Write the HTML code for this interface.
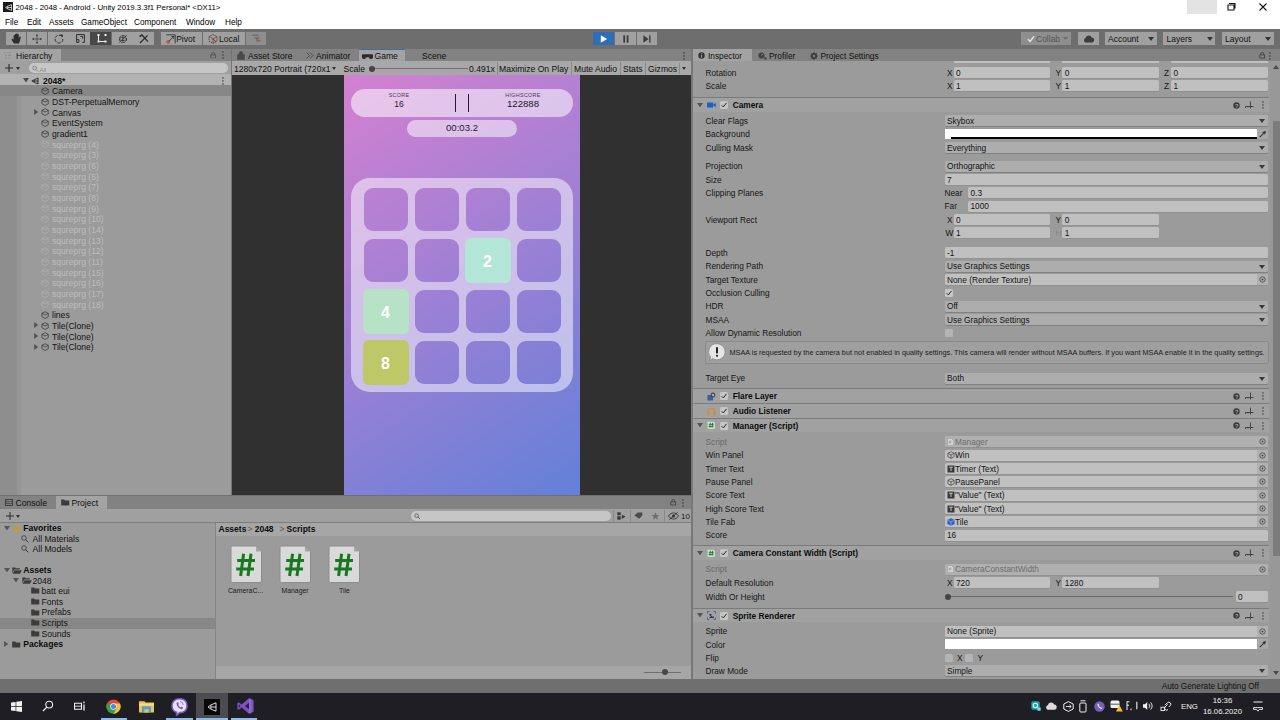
<!DOCTYPE html>
<html><head><meta charset="utf-8"><title>Unity</title>
<style>
html,body{margin:0;padding:0;}
body{width:1280px;height:720px;overflow:hidden;position:relative;background:#9a9a9a;font-family:"Liberation Sans",sans-serif;}
div,span,svg{position:absolute;box-sizing:border-box;}
span{white-space:nowrap;}
#root{left:0;top:0;width:1280px;height:720px;overflow:hidden;}
</style></head><body><div id="root">
<div style="left:0px;top:0px;width:1280px;height:29px;background:#ffffff;"></div>
<div style="left:3px;top:2px;width:10px;height:10px;background:#1a1a1a;"></div>
<span style="top:2px;line-height:12px;font-size:7.8px;color:#000;left:15.5px;">2048 - 2048 - Android - Unity 2019.3.3f1 Personal* &lt;DX11&gt;</span>
<span style="top:17px;line-height:12px;font-size:8.2px;color:#000;left:5px;">File</span>
<span style="top:17px;line-height:12px;font-size:8.2px;color:#000;left:27px;">Edit</span>
<span style="top:17px;line-height:12px;font-size:8.2px;color:#000;left:49px;">Assets</span>
<span style="top:17px;line-height:12px;font-size:8.2px;color:#000;left:81px;">GameObject</span>
<span style="top:17px;line-height:12px;font-size:8.2px;color:#000;left:134px;">Component</span>
<span style="top:17px;line-height:12px;font-size:8.2px;color:#000;left:186px;">Window</span>
<span style="top:17px;line-height:12px;font-size:8.2px;color:#000;left:225px;">Help</span>
<div style="left:1187px;top:0px;width:30px;height:14px;background:#e3e3e3;"></div>
<svg style="left:1226px;top:2px" width="12" height="10" viewBox="0 0 12 10"><path d="M3 1.5h6v5M2 3h6v5H2z" fill="none" stroke="#111" stroke-width="1.1"/></svg>
<svg style="left:1258px;top:2px" width="10" height="10" viewBox="0 0 10 10"><path d="M1.5 1.5l7 7M8.5 1.5l-7 7" stroke="#111" stroke-width="1.1"/></svg>
<div style="left:0px;top:29px;width:1280px;height:20px;background:#6e6e6e;"></div>
<div style="left:5.7px;top:32px;width:20.3px;height:13px;background:#a0a0a0;"></div>
<div style="left:27px;top:32px;width:20.3px;height:13px;background:#a0a0a0;"></div>
<div style="left:48.2px;top:32px;width:42px;height:13px;background:#a0a0a0;"></div>
<div style="left:90.3px;top:32px;width:21.2px;height:13px;background:#484848;"></div>
<div style="left:112px;top:32px;width:42px;height:13px;background:#a0a0a0;"></div>
<div style="left:161px;top:32px;width:41px;height:13px;background:#a0a0a0;"></div>
<div style="left:203px;top:32px;width:42px;height:13px;background:#a0a0a0;"></div>
<div style="left:246px;top:32px;width:20px;height:13px;background:#8e8e8e;"></div>
<span style="top:33px;line-height:12px;font-size:8.5px;color:#101010;left:176.2px;">Pivot</span>
<span style="top:33px;line-height:12px;font-size:8.5px;color:#101010;left:219px;">Local</span>
<div style="left:593px;top:32px;width:21px;height:13px;background:#2f6db5;"></div>
<div style="left:615px;top:32px;width:21px;height:13px;background:#a0a0a0;"></div>
<div style="left:637px;top:32px;width:20px;height:13px;background:#a0a0a0;"></div>
<div style="left:1021px;top:32px;width:50px;height:13px;background:#8e8e8e;"></div>
<span style="top:33px;line-height:12px;font-size:8.5px;color:#555;left:1036px;">Collab</span>
<div style="left:1078px;top:32px;width:20.5px;height:13px;background:#a0a0a0;"></div>
<div style="left:1105px;top:32px;width:52px;height:13px;background:#a0a0a0;"></div>
<span style="top:33px;line-height:12px;font-size:8.5px;color:#101010;left:1108px;">Account</span>
<div style="left:1163px;top:32px;width:52px;height:13px;background:#a0a0a0;"></div>
<span style="top:33px;line-height:12px;font-size:8.5px;color:#101010;left:1166.5px;">Layers</span>
<div style="left:1222px;top:32px;width:52px;height:13px;background:#a0a0a0;"></div>
<span style="top:33px;line-height:12px;font-size:8.5px;color:#101010;left:1225px;">Layout</span>
<div style="left:0px;top:48.5px;width:232px;height:12.5px;background:#828282;"></div>
<div style="left:0px;top:48.5px;width:61px;height:12.5px;background:#a3a3a3;"></div>
<span style="top:50px;line-height:12px;font-size:8.5px;color:#101010;left:16px;">Hierarchy</span>
<div style="left:0px;top:61px;width:232px;height:13px;background:#a0a0a0;"></div>
<div style="left:29px;top:63px;width:199px;height:10px;background:#c6c6c6;border-radius:5px;"></div>
<div style="left:0px;top:74px;width:232px;height:421px;background:#9b9b9b;"></div>
<div style="left:0px;top:74px;width:20.5px;height:421px;background:#959595;"></div>
<div style="left:0px;top:74px;width:17px;height:421px;background:#8e8e8e;"></div>
<div style="left:0px;top:74px;width:232px;height:11px;background:#b2b2b2;"></div>
<div style="left:0px;top:85px;width:232px;height:11px;background:#878787;"></div>
<div style="left:232px;top:48.5px;width:459px;height:12.5px;background:#828282;"></div>
<div style="left:359px;top:48.5px;width:46px;height:12.5px;background:#a3a3a3;border-top:1px solid #3f6fa8;"></div>
<div style="left:232px;top:61px;width:459px;height:14px;background:#a8a8a8;"></div>
<div style="left:232px;top:75px;width:459px;height:420px;background:#303030;"></div>
<div style="left:344px;top:75px;width:236px;height:420px;background:linear-gradient(146deg,rgb(213,128,209) 0%,rgb(99,128,216) 100%);"></div>
<div style="left:691px;top:49px;width:2px;height:630px;background:#787878;"></div>
<div style="left:231px;top:49px;width:1px;height:447px;background:#757575;"></div>
<div style="left:693px;top:48.5px;width:587px;height:12.5px;background:#828282;"></div>
<div style="left:693px;top:48.5px;width:59px;height:12.5px;background:#a3a3a3;"></div>
<div style="left:693px;top:61px;width:587px;height:618px;background:#9b9b9b;"></div>
<div style="left:0px;top:495px;width:691px;height:1.2px;background:#707070;"></div>
<div style="left:0px;top:496px;width:691px;height:13px;background:#828282;"></div>
<div style="left:56px;top:496px;width:51px;height:13px;background:#a3a3a3;"></div>
<div style="left:0px;top:509px;width:691px;height:13px;background:#a0a0a0;"></div>
<div style="left:0px;top:522px;width:691px;height:0.8px;background:#7e7e7e;"></div>
<div style="left:0px;top:522.8px;width:215px;height:157px;background:#9b9b9b;"></div>
<div style="left:215px;top:522.8px;width:1px;height:157px;background:#858585;"></div>
<div style="left:216px;top:522.8px;width:475px;height:157px;background:#9b9b9b;"></div>
<div style="left:216px;top:522.8px;width:475px;height:13px;background:#a6a6a6;"></div>
<div style="left:216px;top:665.5px;width:475px;height:13.5px;background:#a6a6a6;"></div>
<div style="left:0px;top:618px;width:215px;height:10.5px;background:#878787;"></div>
<div style="left:0px;top:679px;width:1280px;height:14px;background:#6f6f6f;"></div>
<span style="top:681px;line-height:12px;font-size:8.2px;color:#111;right:21px;">Auto Generate Lighting Off</span>
<div style="left:0px;top:693px;width:1280px;height:27px;background:#1f1e25;"></div>
<svg style="left:209.5px;top:51.5px" width="6.5" height="6.5" viewBox="0 0 8 8"><path d="M2.2 3.6V2.4a1.8 1.8 0 0 1 3.6 0V3.6" fill="none" stroke="#4a4a4a" stroke-width="0.9"/><rect x="1" y="3.6" width="6" height="3.8" fill="none" stroke="#4a4a4a" stroke-width="0.9"/></svg>
<svg style="left:221.5px;top:51px" width="2" height="8" viewBox="0 0 2 8"><rect x="0.3" y="0.3" width="1.3" height="1.3" fill="#3a3a3a"/><rect x="0.3" y="3.3" width="1.3" height="1.3" fill="#3a3a3a"/><rect x="0.3" y="6.3" width="1.3" height="1.3" fill="#3a3a3a"/></svg>
<svg style="left:4px;top:52px" width="7" height="7" viewBox="0 0 7 7"><path d="M0 1h2M3 1h4M1 3.5h2M4 3.5h3M1 6h2M4 6h3" stroke="#8c8c8c" stroke-width="0.9"/></svg>
<svg style="left:5px;top:64px" width="8" height="8" viewBox="0 0 8 8"><path d="M4 0v8M0 4h8" stroke="#2a2a2a" stroke-width="1.1"/></svg>
<svg style="left:16px;top:67px" width="4" height="3" viewBox="0 0 4 3"><path d="M0 0h4L2 3z" fill="#333"/></svg>
<svg style="left:32px;top:64.5px" width="14" height="8" viewBox="0 0 14 8"><circle cx="2.6" cy="3" r="1.9" fill="none" stroke="#777" stroke-width="0.8"/><path d="M4 4.4L6 6.6" stroke="#777" stroke-width="0.8"/><text x="7.5" y="6.5" font-size="6" fill="#888" font-family="Liberation Sans">All</text></svg>
<svg style="left:23px;top:78.0px" width="6" height="4.5" viewBox="0 0 7 5"><path d="M0 0H7L3.5 5Z" fill="#4a4a4a"/></svg>
<svg style="left:31px;top:76.5px" width="8" height="8" viewBox="0 0 8 8"><path d="M7 1L3.2 2.8V5.2L7 7M3.2 2.8L0.8 4L3.2 5.2M7 1V7M3.2 4H7" fill="none" stroke="#1a1a1a" stroke-width="0.85"/></svg>
<span style="top:75px;line-height:12px;font-size:8.6px;color:#0c0c0c;font-weight:700;left:43px;">2048*</span>
<svg style="left:221.5px;top:76.5px" width="2" height="8" viewBox="0 0 2 8"><rect x="0.3" y="0.3" width="1.3" height="1.3" fill="#333"/><rect x="0.3" y="3.3" width="1.3" height="1.3" fill="#333"/><rect x="0.3" y="6.3" width="1.3" height="1.3" fill="#333"/></svg>
<svg style="left:41.2px;top:86.967px" width="8.2" height="8.2" viewBox="0 0 9 9"><path d="M4.5 0.8L8 2.6V6.4L4.5 8.2L1 6.4V2.6Z M1 2.6L4.5 4.4L8 2.6" fill="none" stroke="#363636" stroke-width="0.8"/></svg>
<span style="top:85px;line-height:12px;font-size:8.6px;color:#141414;left:52px;">Camera</span>
<svg style="left:41.2px;top:97.634px" width="8.2" height="8.2" viewBox="0 0 9 9"><path d="M4.5 0.8L8 2.6V6.4L4.5 8.2L1 6.4V2.6Z M1 2.6L4.5 4.4L8 2.6" fill="none" stroke="#363636" stroke-width="0.8"/></svg>
<span style="top:96px;line-height:12px;font-size:8.6px;color:#141414;left:52px;">DST-PerpetualMemory</span>
<svg style="left:41.2px;top:108.301px" width="8.2" height="8.2" viewBox="0 0 9 9"><path d="M4.5 0.8L8 2.6V6.4L4.5 8.2L1 6.4V2.6Z M1 2.6L4.5 4.4L8 2.6" fill="none" stroke="#363636" stroke-width="0.8"/></svg>
<span style="top:107px;line-height:12px;font-size:8.6px;color:#141414;left:52px;">Canvas</span>
<svg style="left:41.2px;top:118.968px" width="8.2" height="8.2" viewBox="0 0 9 9"><path d="M4.5 0.8L8 2.6V6.4L4.5 8.2L1 6.4V2.6Z M1 2.6L4.5 4.4L8 2.6" fill="none" stroke="#363636" stroke-width="0.8"/></svg>
<span style="top:117px;line-height:12px;font-size:8.6px;color:#141414;left:52px;">EventSystem</span>
<svg style="left:41.2px;top:129.63500000000002px" width="8.2" height="8.2" viewBox="0 0 9 9"><path d="M4.5 0.8L8 2.6V6.4L4.5 8.2L1 6.4V2.6Z M1 2.6L4.5 4.4L8 2.6" fill="none" stroke="#363636" stroke-width="0.8"/></svg>
<span style="top:128px;line-height:12px;font-size:8.6px;color:#141414;left:52px;">gradient1</span>
<svg style="left:41.2px;top:140.30200000000002px" width="8.2" height="8.2" viewBox="0 0 9 9"><path d="M4.5 0.8L8 2.6V6.4L4.5 8.2L1 6.4V2.6Z M1 2.6L4.5 4.4L8 2.6" fill="none" stroke="#b0b0b0" stroke-width="0.8"/></svg>
<span style="top:139px;line-height:12px;font-size:8.6px;color:#bdbdbd;left:52px;">squreprg (4)</span>
<svg style="left:41.2px;top:150.969px" width="8.2" height="8.2" viewBox="0 0 9 9"><path d="M4.5 0.8L8 2.6V6.4L4.5 8.2L1 6.4V2.6Z M1 2.6L4.5 4.4L8 2.6" fill="none" stroke="#b0b0b0" stroke-width="0.8"/></svg>
<span style="top:149px;line-height:12px;font-size:8.6px;color:#bdbdbd;left:52px;">squreprg (3)</span>
<svg style="left:41.2px;top:161.63600000000002px" width="8.2" height="8.2" viewBox="0 0 9 9"><path d="M4.5 0.8L8 2.6V6.4L4.5 8.2L1 6.4V2.6Z M1 2.6L4.5 4.4L8 2.6" fill="none" stroke="#b0b0b0" stroke-width="0.8"/></svg>
<span style="top:160px;line-height:12px;font-size:8.6px;color:#bdbdbd;left:52px;">squreprg (6)</span>
<svg style="left:41.2px;top:172.303px" width="8.2" height="8.2" viewBox="0 0 9 9"><path d="M4.5 0.8L8 2.6V6.4L4.5 8.2L1 6.4V2.6Z M1 2.6L4.5 4.4L8 2.6" fill="none" stroke="#b0b0b0" stroke-width="0.8"/></svg>
<span style="top:171px;line-height:12px;font-size:8.6px;color:#bdbdbd;left:52px;">squreprg (5)</span>
<svg style="left:41.2px;top:182.97000000000003px" width="8.2" height="8.2" viewBox="0 0 9 9"><path d="M4.5 0.8L8 2.6V6.4L4.5 8.2L1 6.4V2.6Z M1 2.6L4.5 4.4L8 2.6" fill="none" stroke="#b0b0b0" stroke-width="0.8"/></svg>
<span style="top:181px;line-height:12px;font-size:8.6px;color:#bdbdbd;left:52px;">squreprg (7)</span>
<svg style="left:41.2px;top:193.637px" width="8.2" height="8.2" viewBox="0 0 9 9"><path d="M4.5 0.8L8 2.6V6.4L4.5 8.2L1 6.4V2.6Z M1 2.6L4.5 4.4L8 2.6" fill="none" stroke="#b0b0b0" stroke-width="0.8"/></svg>
<span style="top:192px;line-height:12px;font-size:8.6px;color:#bdbdbd;left:52px;">squreprg (8)</span>
<svg style="left:41.2px;top:204.304px" width="8.2" height="8.2" viewBox="0 0 9 9"><path d="M4.5 0.8L8 2.6V6.4L4.5 8.2L1 6.4V2.6Z M1 2.6L4.5 4.4L8 2.6" fill="none" stroke="#b0b0b0" stroke-width="0.8"/></svg>
<span style="top:203px;line-height:12px;font-size:8.6px;color:#bdbdbd;left:52px;">squreprg (9)</span>
<svg style="left:41.2px;top:214.971px" width="8.2" height="8.2" viewBox="0 0 9 9"><path d="M4.5 0.8L8 2.6V6.4L4.5 8.2L1 6.4V2.6Z M1 2.6L4.5 4.4L8 2.6" fill="none" stroke="#b0b0b0" stroke-width="0.8"/></svg>
<span style="top:213px;line-height:12px;font-size:8.6px;color:#bdbdbd;left:52px;">squreprg (10)</span>
<svg style="left:41.2px;top:225.638px" width="8.2" height="8.2" viewBox="0 0 9 9"><path d="M4.5 0.8L8 2.6V6.4L4.5 8.2L1 6.4V2.6Z M1 2.6L4.5 4.4L8 2.6" fill="none" stroke="#b0b0b0" stroke-width="0.8"/></svg>
<span style="top:224px;line-height:12px;font-size:8.6px;color:#bdbdbd;left:52px;">squreprg (14)</span>
<svg style="left:41.2px;top:236.305px" width="8.2" height="8.2" viewBox="0 0 9 9"><path d="M4.5 0.8L8 2.6V6.4L4.5 8.2L1 6.4V2.6Z M1 2.6L4.5 4.4L8 2.6" fill="none" stroke="#b0b0b0" stroke-width="0.8"/></svg>
<span style="top:235px;line-height:12px;font-size:8.6px;color:#bdbdbd;left:52px;">squreprg (13)</span>
<svg style="left:41.2px;top:246.972px" width="8.2" height="8.2" viewBox="0 0 9 9"><path d="M4.5 0.8L8 2.6V6.4L4.5 8.2L1 6.4V2.6Z M1 2.6L4.5 4.4L8 2.6" fill="none" stroke="#b0b0b0" stroke-width="0.8"/></svg>
<span style="top:245px;line-height:12px;font-size:8.6px;color:#bdbdbd;left:52px;">squreprg (12)</span>
<svg style="left:41.2px;top:257.639px" width="8.2" height="8.2" viewBox="0 0 9 9"><path d="M4.5 0.8L8 2.6V6.4L4.5 8.2L1 6.4V2.6Z M1 2.6L4.5 4.4L8 2.6" fill="none" stroke="#b0b0b0" stroke-width="0.8"/></svg>
<span style="top:256px;line-height:12px;font-size:8.6px;color:#bdbdbd;left:52px;">squreprg (11)</span>
<svg style="left:41.2px;top:268.306px" width="8.2" height="8.2" viewBox="0 0 9 9"><path d="M4.5 0.8L8 2.6V6.4L4.5 8.2L1 6.4V2.6Z M1 2.6L4.5 4.4L8 2.6" fill="none" stroke="#b0b0b0" stroke-width="0.8"/></svg>
<span style="top:267px;line-height:12px;font-size:8.6px;color:#bdbdbd;left:52px;">squreprg (15)</span>
<svg style="left:41.2px;top:278.973px" width="8.2" height="8.2" viewBox="0 0 9 9"><path d="M4.5 0.8L8 2.6V6.4L4.5 8.2L1 6.4V2.6Z M1 2.6L4.5 4.4L8 2.6" fill="none" stroke="#b0b0b0" stroke-width="0.8"/></svg>
<span style="top:277px;line-height:12px;font-size:8.6px;color:#bdbdbd;left:52px;">squreprg (16)</span>
<svg style="left:41.2px;top:289.64000000000004px" width="8.2" height="8.2" viewBox="0 0 9 9"><path d="M4.5 0.8L8 2.6V6.4L4.5 8.2L1 6.4V2.6Z M1 2.6L4.5 4.4L8 2.6" fill="none" stroke="#b0b0b0" stroke-width="0.8"/></svg>
<span style="top:288px;line-height:12px;font-size:8.6px;color:#bdbdbd;left:52px;">squreprg (17)</span>
<svg style="left:41.2px;top:300.307px" width="8.2" height="8.2" viewBox="0 0 9 9"><path d="M4.5 0.8L8 2.6V6.4L4.5 8.2L1 6.4V2.6Z M1 2.6L4.5 4.4L8 2.6" fill="none" stroke="#b0b0b0" stroke-width="0.8"/></svg>
<span style="top:299px;line-height:12px;font-size:8.6px;color:#bdbdbd;left:52px;">squreprg (18)</span>
<svg style="left:41.2px;top:310.974px" width="8.2" height="8.2" viewBox="0 0 9 9"><path d="M4.5 0.8L8 2.6V6.4L4.5 8.2L1 6.4V2.6Z M1 2.6L4.5 4.4L8 2.6" fill="none" stroke="#363636" stroke-width="0.8"/></svg>
<span style="top:309px;line-height:12px;font-size:8.6px;color:#141414;left:52px;">lines</span>
<svg style="left:41.2px;top:321.641px" width="8.2" height="8.2" viewBox="0 0 9 9"><path d="M4.5 0.8L8 2.6V6.4L4.5 8.2L1 6.4V2.6Z M1 2.6L4.5 4.4L8 2.6" fill="none" stroke="#363636" stroke-width="0.8"/></svg>
<span style="top:320px;line-height:12px;font-size:8.6px;color:#141414;left:52px;">Tile(Clone)</span>
<svg style="left:41.2px;top:332.308px" width="8.2" height="8.2" viewBox="0 0 9 9"><path d="M4.5 0.8L8 2.6V6.4L4.5 8.2L1 6.4V2.6Z M1 2.6L4.5 4.4L8 2.6" fill="none" stroke="#363636" stroke-width="0.8"/></svg>
<span style="top:331px;line-height:12px;font-size:8.6px;color:#141414;left:52px;">Tile(Clone)</span>
<svg style="left:41.2px;top:342.975px" width="8.2" height="8.2" viewBox="0 0 9 9"><path d="M4.5 0.8L8 2.6V6.4L4.5 8.2L1 6.4V2.6Z M1 2.6L4.5 4.4L8 2.6" fill="none" stroke="#363636" stroke-width="0.8"/></svg>
<span style="top:341px;line-height:12px;font-size:8.6px;color:#141414;left:52px;">Tile(Clone)</span>
<svg style="left:34px;top:109.001px" width="4.5" height="6" viewBox="0 0 5 7"><path d="M0 0L5 3.5L0 7Z" fill="#555"/></svg>
<svg style="left:34px;top:322.341px" width="4.5" height="6" viewBox="0 0 5 7"><path d="M0 0L5 3.5L0 7Z" fill="#555"/></svg>
<svg style="left:34px;top:333.008px" width="4.5" height="6" viewBox="0 0 5 7"><path d="M0 0L5 3.5L0 7Z" fill="#555"/></svg>
<svg style="left:34px;top:343.675px" width="4.5" height="6" viewBox="0 0 5 7"><path d="M0 0L5 3.5L0 7Z" fill="#555"/></svg>
<span style="top:50px;line-height:12px;font-size:8.6px;color:#101010;left:248px;">Asset Store</span>
<svg style="left:237px;top:51px" width="8" height="9" viewBox="0 0 8 9"><path d="M0.5 3.5h7v5h-7zM2.2 3.5V2.2a1.8 1.8 0 0 1 3.6 0v1.3" fill="#4a4a4a" stroke="#4a4a4a" stroke-width="0.6" fill-rule="evenodd"/></svg>
<span style="top:50px;line-height:12px;font-size:8.6px;color:#101010;left:316px;">Animator</span>
<svg style="left:306px;top:52px" width="8" height="7" viewBox="0 0 8 7"><path d="M0.5 0.5L3.5 3.5L0.5 6.5M4 0.5L7 3.5L4 6.5" fill="none" stroke="#4a4a4a" stroke-width="0.9"/></svg>
<span style="top:50px;line-height:12px;font-size:8.6px;color:#101010;left:374.5px;">Game</span>
<svg style="left:362px;top:52.5px" width="11" height="6" viewBox="0 0 11 6"><path d="M1 1.2h9a1 1 0 0 1 1 1v1.6a2 2 0 0 1-4 0.4h-3a2 2 0 0 1-4-0.4V2.2a1 1 0 0 1 1-1z" fill="#2a2a2a"/></svg>
<span style="top:50px;line-height:12px;font-size:8.6px;color:#101010;left:422px;">Scene</span>
<svg style="left:683px;top:51.5px" width="2" height="8" viewBox="0 0 2 8"><rect x="0.3" y="0.3" width="1.3" height="1.3" fill="#333"/><rect x="0.3" y="3.3" width="1.3" height="1.3" fill="#333"/><rect x="0.3" y="6.3" width="1.3" height="1.3" fill="#333"/></svg>
<span style="top:63px;line-height:12px;font-size:8.6px;color:#101010;left:234px;">1280x720 Portrait (720x1</span>
<svg style="left:332px;top:67px" width="4" height="3" viewBox="0 0 4 3"><path d="M0 0h4L2 3z" fill="#333"/></svg>
<span style="top:63px;line-height:12px;font-size:8.6px;color:#101010;left:343.5px;">Scale</span>
<div style="left:372px;top:68px;width:96px;height:1px;background:#7a6b84;"></div>
<div style="left:368.5px;top:65.5px;width:6px;height:6px;background:#444;border-radius:3px;"></div>
<span style="top:63px;line-height:12px;font-size:8.6px;color:#101010;left:469px;">0.491x</span>
<div style="left:496.5px;top:62px;width:1px;height:13px;background:#8a8a8a;"></div>
<span style="top:63px;line-height:12px;font-size:8.6px;color:#101010;left:499px;">Maximize On Play</span>
<div style="left:570.5px;top:62px;width:1px;height:13px;background:#8a8a8a;"></div>
<span style="top:63px;line-height:12px;font-size:8.6px;color:#101010;left:574px;">Mute Audio</span>
<div style="left:619.5px;top:62px;width:1px;height:13px;background:#8a8a8a;"></div>
<span style="top:63px;line-height:12px;font-size:8.6px;color:#101010;left:623px;">Stats</span>
<div style="left:644.5px;top:62px;width:1px;height:13px;background:#8a8a8a;"></div>
<span style="top:63px;line-height:12px;font-size:8.6px;color:#101010;left:648px;">Gizmos</span>
<div style="left:678.5px;top:63px;width:1px;height:11px;background:#8a8a8a;"></div>
<svg style="left:682px;top:67px" width="4" height="3" viewBox="0 0 4 3"><path d="M0 0h4L2 3z" fill="#333"/></svg>
<div style="left:351px;top:89px;width:222px;height:28px;background:rgba(255,255,255,0.54);border-radius:14px;"></div>
<div style="left:406.5px;top:120px;width:110.5px;height:17px;background:rgba(255,255,255,0.52);border-radius:8.5px;"></div>
<span style="top:89px;line-height:12px;font-size:5.4px;color:#4a3a55;left:299px;width:200px;text-align:center;letter-spacing:0.3px;">SCORE</span>
<span style="top:98px;line-height:12px;font-size:8.5px;color:#2a2030;left:299px;width:200px;text-align:center;">16</span>
<span style="top:89px;line-height:12px;font-size:5.4px;color:#4a3a55;left:423px;width:200px;text-align:center;letter-spacing:0.3px;">HIGHSCORE</span>
<span style="top:98px;line-height:12px;font-size:9.6px;color:#1e1826;left:423px;width:200px;text-align:center;">122888</span>
<div style="left:455px;top:94px;width:1.2px;height:18px;background:#2a1a30;"></div>
<div style="left:468px;top:94px;width:1.2px;height:18px;background:#2a1a30;"></div>
<span style="top:122px;line-height:12px;font-size:9.6px;color:#2a2030;left:362px;width:200px;text-align:center;">00:03.2</span>
<div style="left:351px;top:178px;width:222px;height:214px;background:rgba(255,255,255,0.5);border-radius:19px;"></div>
<div style="left:364px;top:188px;width:44px;height:42.5px;border-radius:9px;background-image:linear-gradient(146deg,rgb(213,128,209) 0%,rgb(99,128,216) 100%);background-size:236px 420px;background-position:-20px -113px;background-repeat:no-repeat;"></div>
<div style="left:415px;top:188px;width:44px;height:42.5px;border-radius:9px;background-image:linear-gradient(146deg,rgb(213,128,209) 0%,rgb(99,128,216) 100%);background-size:236px 420px;background-position:-71px -113px;background-repeat:no-repeat;"></div>
<div style="left:466px;top:188px;width:44px;height:42.5px;border-radius:9px;background-image:linear-gradient(146deg,rgb(213,128,209) 0%,rgb(99,128,216) 100%);background-size:236px 420px;background-position:-122px -113px;background-repeat:no-repeat;"></div>
<div style="left:517px;top:188px;width:44px;height:42.5px;border-radius:9px;background-image:linear-gradient(146deg,rgb(213,128,209) 0%,rgb(99,128,216) 100%);background-size:236px 420px;background-position:-173px -113px;background-repeat:no-repeat;"></div>
<div style="left:364px;top:239px;width:44px;height:42.5px;border-radius:9px;background-image:linear-gradient(146deg,rgb(213,128,209) 0%,rgb(99,128,216) 100%);background-size:236px 420px;background-position:-20px -164px;background-repeat:no-repeat;"></div>
<div style="left:415px;top:239px;width:44px;height:42.5px;border-radius:9px;background-image:linear-gradient(146deg,rgb(213,128,209) 0%,rgb(99,128,216) 100%);background-size:236px 420px;background-position:-71px -164px;background-repeat:no-repeat;"></div>
<div style="left:466px;top:239px;width:44px;height:42.5px;border-radius:9px;background-image:linear-gradient(146deg,rgb(213,128,209) 0%,rgb(99,128,216) 100%);background-size:236px 420px;background-position:-122px -164px;background-repeat:no-repeat;"></div>
<div style="left:517px;top:239px;width:44px;height:42.5px;border-radius:9px;background-image:linear-gradient(146deg,rgb(213,128,209) 0%,rgb(99,128,216) 100%);background-size:236px 420px;background-position:-173px -164px;background-repeat:no-repeat;"></div>
<div style="left:364px;top:290px;width:44px;height:42.5px;border-radius:9px;background-image:linear-gradient(146deg,rgb(213,128,209) 0%,rgb(99,128,216) 100%);background-size:236px 420px;background-position:-20px -215px;background-repeat:no-repeat;"></div>
<div style="left:415px;top:290px;width:44px;height:42.5px;border-radius:9px;background-image:linear-gradient(146deg,rgb(213,128,209) 0%,rgb(99,128,216) 100%);background-size:236px 420px;background-position:-71px -215px;background-repeat:no-repeat;"></div>
<div style="left:466px;top:290px;width:44px;height:42.5px;border-radius:9px;background-image:linear-gradient(146deg,rgb(213,128,209) 0%,rgb(99,128,216) 100%);background-size:236px 420px;background-position:-122px -215px;background-repeat:no-repeat;"></div>
<div style="left:517px;top:290px;width:44px;height:42.5px;border-radius:9px;background-image:linear-gradient(146deg,rgb(213,128,209) 0%,rgb(99,128,216) 100%);background-size:236px 420px;background-position:-173px -215px;background-repeat:no-repeat;"></div>
<div style="left:364px;top:341px;width:44px;height:42.5px;border-radius:9px;background-image:linear-gradient(146deg,rgb(213,128,209) 0%,rgb(99,128,216) 100%);background-size:236px 420px;background-position:-20px -266px;background-repeat:no-repeat;"></div>
<div style="left:415px;top:341px;width:44px;height:42.5px;border-radius:9px;background-image:linear-gradient(146deg,rgb(213,128,209) 0%,rgb(99,128,216) 100%);background-size:236px 420px;background-position:-71px -266px;background-repeat:no-repeat;"></div>
<div style="left:466px;top:341px;width:44px;height:42.5px;border-radius:9px;background-image:linear-gradient(146deg,rgb(213,128,209) 0%,rgb(99,128,216) 100%);background-size:236px 420px;background-position:-122px -266px;background-repeat:no-repeat;"></div>
<div style="left:517px;top:341px;width:44px;height:42.5px;border-radius:9px;background-image:linear-gradient(146deg,rgb(213,128,209) 0%,rgb(99,128,216) 100%);background-size:236px 420px;background-position:-173px -266px;background-repeat:no-repeat;"></div>
<div style="left:465px;top:237.5px;width:45.5px;height:45.5px;background:#b3e6d6;border-radius:6px;"></div>
<span style="top:256px;line-height:12px;font-size:16px;color:#ffffff;font-weight:700;left:387.5px;width:200px;text-align:center;">2</span>
<div style="left:363px;top:288.5px;width:45.5px;height:45.5px;background:#b8e2c6;border-radius:6px;"></div>
<span style="top:307px;line-height:12px;font-size:16px;color:#ffffff;font-weight:700;left:285.5px;width:200px;text-align:center;">4</span>
<div style="left:363px;top:339.5px;width:45.5px;height:45.5px;background:#bfc866;border-radius:6px;"></div>
<span style="top:358px;line-height:12px;font-size:16px;color:#ffffff;font-weight:700;left:285.5px;width:200px;text-align:center;">8</span>
<svg style="left:698px;top:52px" width="7" height="7" viewBox="0 0 7 7"><circle cx="3.5" cy="3.5" r="3.2" fill="#333"/><rect x="3" y="2.9" width="1" height="2.6" fill="#a3a3a3"/><rect x="3" y="1.4" width="1" height="1" fill="#a3a3a3"/></svg>
<span style="top:50px;line-height:12px;font-size:8.3px;color:#101010;left:708px;">Inspector</span>
<svg style="left:757.5px;top:52px" width="9" height="8" viewBox="0 0 9 8"><circle cx="3.5" cy="3.5" r="3.1" fill="#444"/><path d="M3.5 3.5L5 1.8" stroke="#a0a0a0" stroke-width="0.8"/><circle cx="7.5" cy="6.5" r="1.2" fill="#444"/></svg>
<span style="top:50px;line-height:12px;font-size:8.3px;color:#101010;left:769px;">Profiler</span>
<svg style="left:810px;top:51.5px" width="8" height="8" viewBox="0 0 8 8"><circle cx="4" cy="4" r="2.3" fill="none" stroke="#3a3a3a" stroke-width="1.5"/><path d="M4 0v8M0 4h8M1.2 1.2l5.6 5.6M6.8 1.2L1.2 6.8" stroke="#3a3a3a" stroke-width="0.9"/><circle cx="4" cy="4" r="1.1" fill="#858585"/></svg>
<span style="top:50px;line-height:12px;font-size:8.3px;color:#101010;left:820.5px;">Project Settings</span>
<svg style="left:1259px;top:52.0px" width="6.5" height="6.5" viewBox="0 0 8 8"><path d="M2.2 3.6V2.4a1.8 1.8 0 0 1 3.6 0V3.6" fill="none" stroke="#3a3a3a" stroke-width="0.9"/><rect x="1" y="3.6" width="6" height="3.8" fill="none" stroke="#3a3a3a" stroke-width="0.9"/></svg>
<svg style="left:1269px;top:51.5px" width="2" height="8" viewBox="0 0 2 8"><rect x="0.3" y="0.3" width="1.3" height="1.3" fill="#3a3a3a"/><rect x="0.3" y="3.3" width="1.3" height="1.3" fill="#3a3a3a"/><rect x="0.3" y="6.3" width="1.3" height="1.3" fill="#3a3a3a"/></svg>
<div style="left:953.5px;top:61px;width:96.5px;height:2.2px;background:#c0c0c0;"></div>
<div style="left:1062.3px;top:61px;width:96.5px;height:2.2px;background:#c0c0c0;"></div>
<div style="left:1171px;top:61px;width:97px;height:2.2px;background:#c0c0c0;"></div>
<span style="top:67px;line-height:12px;font-size:8.3px;color:#161616;left:705.5px;">Rotation</span>
<span style="top:67px;line-height:12px;font-size:8.3px;color:#161616;left:947px;">X</span>
<div style="left:953.5px;top:67.0px;width:96.5px;height:11px;background:#c0c0c0;border-radius:1.5px;box-shadow:0 0.6px 0 rgba(0,0,0,0.13);"></div>
<span style="top:67px;line-height:12px;font-size:8.3px;color:#141414;left:956.0px;">0</span>
<span style="top:67px;line-height:12px;font-size:8.3px;color:#161616;left:1055.5px;">Y</span>
<div style="left:1062.3px;top:67.0px;width:96.5px;height:11px;background:#c0c0c0;border-radius:1.5px;box-shadow:0 0.6px 0 rgba(0,0,0,0.13);"></div>
<span style="top:67px;line-height:12px;font-size:8.3px;color:#141414;left:1064.8px;">0</span>
<span style="top:67px;line-height:12px;font-size:8.3px;color:#161616;left:1164px;">Z</span>
<div style="left:1171px;top:67.0px;width:97px;height:11px;background:#c0c0c0;border-radius:1.5px;box-shadow:0 0.6px 0 rgba(0,0,0,0.13);"></div>
<span style="top:67px;line-height:12px;font-size:8.3px;color:#141414;left:1173.5px;">0</span>
<span style="top:80px;line-height:12px;font-size:8.3px;color:#161616;left:705.5px;">Scale</span>
<span style="top:80px;line-height:12px;font-size:8.3px;color:#161616;left:947px;">X</span>
<div style="left:953.5px;top:80.3px;width:96.5px;height:11px;background:#c0c0c0;border-radius:1.5px;box-shadow:0 0.6px 0 rgba(0,0,0,0.13);"></div>
<span style="top:80px;line-height:12px;font-size:8.3px;color:#141414;left:956.0px;">1</span>
<span style="top:80px;line-height:12px;font-size:8.3px;color:#161616;left:1055.5px;">Y</span>
<div style="left:1062.3px;top:80.3px;width:96.5px;height:11px;background:#c0c0c0;border-radius:1.5px;box-shadow:0 0.6px 0 rgba(0,0,0,0.13);"></div>
<span style="top:80px;line-height:12px;font-size:8.3px;color:#141414;left:1064.8px;">1</span>
<span style="top:80px;line-height:12px;font-size:8.3px;color:#161616;left:1164px;">Z</span>
<div style="left:1171px;top:80.3px;width:97px;height:11px;background:#c0c0c0;border-radius:1.5px;box-shadow:0 0.6px 0 rgba(0,0,0,0.13);"></div>
<span style="top:80px;line-height:12px;font-size:8.3px;color:#141414;left:1173.5px;">1</span>
<div style="left:693px;top:97.0px;width:576px;height:14.5px;background:#a1a1a1;border-top:1px solid #7a7a7a;"></div>
<svg style="left:696.5px;top:102.5px" width="6" height="4.5" viewBox="0 0 7 5"><path d="M0 0H7L3.5 5Z" fill="#555"/></svg>
<svg style="left:707px;top:101.7px" width="9" height="6" viewBox="0 0 9 6"><path d="M0 0.5h6.2v5h-6.2zM6 3L8.8 0.8v4.4z" fill="#1660d0"/></svg>
<div style="left:719.8px;top:101.0px;width:8px;height:8px;background:#c6c6c6;border-radius:1.5px;"></div>
<svg style="left:719.8px;top:101.0px" width="8" height="8" viewBox="0 0 8 8"><path d="M1.6 4.2L3.3 5.9L6.5 1.9" fill="none" stroke="#222" stroke-width="1"/></svg>
<span style="top:99px;line-height:12px;font-size:8.3px;color:#0c0c0c;font-weight:700;left:732.7px;">Camera</span>
<svg style="left:1233px;top:101.5px" width="7" height="7" viewBox="0 0 7 7"><circle cx="3.5" cy="3.5" r="3.2" fill="#3c3c3c"/><text x="2" y="5.6" font-size="5.5" font-weight="700" fill="#a8a8a8" font-family="Liberation Sans">?</text></svg>
<svg style="left:1245px;top:101.0px" width="9" height="8" viewBox="0 0 9 8"><path d="M0.5 5.5H8.5M5.5 0.5V7.5M0.5 5.5v1.5M3 5.5v1" fill="none" stroke="#3c3c3c" stroke-width="0.9"/></svg>
<svg style="left:1261.5px;top:101.0px" width="2" height="8" viewBox="0 0 2 8"><rect x="0.3" y="0.3" width="1.3" height="1.3" fill="#3c3c3c"/><rect x="0.3" y="3.3" width="1.3" height="1.3" fill="#3c3c3c"/><rect x="0.3" y="6.3" width="1.3" height="1.3" fill="#3c3c3c"/></svg>
<span style="top:115px;line-height:12px;font-size:8.3px;color:#161616;left:705.5px;">Clear Flags</span>
<div style="left:944.5px;top:115.0px;width:323.5px;height:11px;background:#adadad;border-radius:1.5px;box-shadow:0 0.7px 0 rgba(0,0,0,0.22);"></div>
<span style="top:115px;line-height:12px;font-size:8.3px;color:#141414;left:947.0px;">Skybox</span>
<svg style="left:1259.0px;top:119.0px" width="6" height="4" viewBox="0 0 6 4"><path d="M0 0h6L3 4z" fill="#3a3a3a"/></svg>
<span style="top:128px;line-height:12px;font-size:8.3px;color:#161616;left:705.5px;">Background</span>
<div style="left:944.5px;top:128.5px;width:312.5px;height:10.5px;background:#ffffff;"></div>
<div style="left:950.5px;top:136.6px;width:306.5px;height:2.4px;background:#000;"></div>
<div style="left:1257px;top:128.5px;width:11px;height:10.5px;background:#a8a8a8;"></div>
<svg style="left:1258.5px;top:130px" width="8" height="8" viewBox="0 0 8 8"><path d="M0.8 7.2L4.6 3.4" stroke="#333" stroke-width="1.1"/><path d="M4 2L6 4M5 3L6.6 1.4" stroke="#333" stroke-width="1.7"/></svg>
<span style="top:142px;line-height:12px;font-size:8.3px;color:#161616;left:705.5px;">Culling Mask</span>
<div style="left:944.5px;top:141.8px;width:323.5px;height:11px;background:#adadad;border-radius:1.5px;box-shadow:0 0.7px 0 rgba(0,0,0,0.22);"></div>
<span style="top:142px;line-height:12px;font-size:8.3px;color:#141414;left:947.0px;">Everything</span>
<svg style="left:1259.0px;top:145.8px" width="6" height="4" viewBox="0 0 6 4"><path d="M0 0h6L3 4z" fill="#3a3a3a"/></svg>
<span style="top:160px;line-height:12px;font-size:8.3px;color:#161616;left:705.5px;">Projection</span>
<div style="left:944.5px;top:160.5px;width:323.5px;height:11px;background:#adadad;border-radius:1.5px;box-shadow:0 0.7px 0 rgba(0,0,0,0.22);"></div>
<span style="top:160px;line-height:12px;font-size:8.3px;color:#141414;left:947.0px;">Orthographic</span>
<svg style="left:1259.0px;top:164.5px" width="6" height="4" viewBox="0 0 6 4"><path d="M0 0h6L3 4z" fill="#3a3a3a"/></svg>
<span style="top:174px;line-height:12px;font-size:8.3px;color:#161616;left:705.5px;">Size</span>
<div style="left:944.5px;top:174.0px;width:323.5px;height:11px;background:#c0c0c0;border-radius:1.5px;box-shadow:0 0.6px 0 rgba(0,0,0,0.13);"></div>
<span style="top:174px;line-height:12px;font-size:8.3px;color:#141414;left:947.0px;">7</span>
<span style="top:187px;line-height:12px;font-size:8.3px;color:#161616;left:705.5px;">Clipping Planes</span>
<span style="top:187px;line-height:12px;font-size:8.3px;color:#161616;left:944.5px;">Near</span>
<div style="left:968px;top:187.3px;width:300px;height:11px;background:#c0c0c0;border-radius:1.5px;box-shadow:0 0.6px 0 rgba(0,0,0,0.13);"></div>
<span style="top:187px;line-height:12px;font-size:8.3px;color:#141414;left:970.5px;">0.3</span>
<span style="top:200px;line-height:12px;font-size:8.3px;color:#161616;left:944.5px;">Far</span>
<div style="left:968px;top:200.6px;width:300px;height:11px;background:#c0c0c0;border-radius:1.5px;box-shadow:0 0.6px 0 rgba(0,0,0,0.13);"></div>
<span style="top:200px;line-height:12px;font-size:8.3px;color:#141414;left:970.5px;">1000</span>
<span style="top:214px;line-height:12px;font-size:8.3px;color:#161616;left:705.5px;">Viewport Rect</span>
<span style="top:214px;line-height:12px;font-size:8.3px;color:#161616;left:947px;">X</span>
<div style="left:953.5px;top:214.1px;width:96.5px;height:11px;background:#c0c0c0;border-radius:1.5px;box-shadow:0 0.6px 0 rgba(0,0,0,0.13);"></div>
<span style="top:214px;line-height:12px;font-size:8.3px;color:#141414;left:956.0px;">0</span>
<span style="top:214px;line-height:12px;font-size:8.3px;color:#161616;left:1055.5px;">Y</span>
<div style="left:1062.3px;top:214.1px;width:96.5px;height:11px;background:#c0c0c0;border-radius:1.5px;box-shadow:0 0.6px 0 rgba(0,0,0,0.13);"></div>
<span style="top:214px;line-height:12px;font-size:8.3px;color:#141414;left:1064.8px;">0</span>
<span style="top:227px;line-height:12px;font-size:8.3px;color:#161616;left:945.5px;">W</span>
<div style="left:953.5px;top:227.4px;width:96.5px;height:11px;background:#c0c0c0;border-radius:1.5px;box-shadow:0 0.6px 0 rgba(0,0,0,0.13);"></div>
<span style="top:227px;line-height:12px;font-size:8.3px;color:#141414;left:956.0px;">1</span>
<span style="top:227px;line-height:12px;font-size:8.3px;color:#8a8a8a;left:1055.5px;">H</span>
<div style="left:1062.3px;top:227.4px;width:96.5px;height:11px;background:#c0c0c0;border-radius:1.5px;box-shadow:0 0.6px 0 rgba(0,0,0,0.13);"></div>
<span style="top:227px;line-height:12px;font-size:8.3px;color:#141414;left:1064.8px;">1</span>
<span style="top:247px;line-height:12px;font-size:8.3px;color:#161616;left:705.5px;">Depth</span>
<div style="left:944.5px;top:247.3px;width:323.5px;height:11px;background:#c0c0c0;border-radius:1.5px;box-shadow:0 0.6px 0 rgba(0,0,0,0.13);"></div>
<span style="top:247px;line-height:12px;font-size:8.3px;color:#141414;left:947.0px;">-1</span>
<span style="top:260px;line-height:12px;font-size:8.3px;color:#161616;left:705.5px;">Rendering Path</span>
<div style="left:944.5px;top:260.7px;width:323.5px;height:11px;background:#adadad;border-radius:1.5px;box-shadow:0 0.7px 0 rgba(0,0,0,0.22);"></div>
<span style="top:260px;line-height:12px;font-size:8.3px;color:#141414;left:947.0px;">Use Graphics Settings</span>
<svg style="left:1259.0px;top:264.7px" width="6" height="4" viewBox="0 0 6 4"><path d="M0 0h6L3 4z" fill="#3a3a3a"/></svg>
<span style="top:274px;line-height:12px;font-size:8.3px;color:#161616;left:705.5px;">Target Texture</span>
<div style="left:944.5px;top:274.1px;width:323.5px;height:11px;background:#c0c0c0;border-radius:1.5px;box-shadow:0 0.6px 0 rgba(0,0,0,0.13);"></div>
<div style="left:1257px;top:274.1px;width:11px;height:11px;background:#b0b0b0;border-radius:0 1.5px 1.5px 0;"></div>
<svg style="left:1259px;top:276.1px" width="7" height="7" viewBox="0 0 7 7"><circle cx="3.5" cy="3.5" r="2.7" fill="none" stroke="#444" stroke-width="0.8"/><circle cx="3.5" cy="3.5" r="0.9" fill="#444"/></svg>
<span style="top:274px;line-height:12px;font-size:8.3px;color:#141414;left:947.0px;">None (Render Texture)</span>
<span style="top:287px;line-height:12px;font-size:8.3px;color:#161616;left:705.5px;">Occlusion Culling</span>
<div style="left:945.0px;top:289px;width:8px;height:8px;background:#c6c6c6;border-radius:1.5px;"></div>
<svg style="left:945.0px;top:289px" width="8" height="8" viewBox="0 0 8 8"><path d="M1.6 4.2L3.3 5.9L6.5 1.9" fill="none" stroke="#222" stroke-width="1"/></svg>
<span style="top:300px;line-height:12px;font-size:8.3px;color:#161616;left:705.5px;">HDR</span>
<div style="left:944.5px;top:300.7px;width:323.5px;height:11px;background:#adadad;border-radius:1.5px;box-shadow:0 0.7px 0 rgba(0,0,0,0.22);"></div>
<span style="top:300px;line-height:12px;font-size:8.3px;color:#141414;left:947.0px;">Off</span>
<svg style="left:1259.0px;top:304.7px" width="6" height="4" viewBox="0 0 6 4"><path d="M0 0h6L3 4z" fill="#3a3a3a"/></svg>
<span style="top:314px;line-height:12px;font-size:8.3px;color:#161616;left:705.5px;">MSAA</span>
<div style="left:944.5px;top:314.0px;width:323.5px;height:11px;background:#adadad;border-radius:1.5px;box-shadow:0 0.7px 0 rgba(0,0,0,0.22);"></div>
<span style="top:314px;line-height:12px;font-size:8.3px;color:#141414;left:947.0px;">Use Graphics Settings</span>
<svg style="left:1259.0px;top:318.0px" width="6" height="4" viewBox="0 0 6 4"><path d="M0 0h6L3 4z" fill="#3a3a3a"/></svg>
<span style="top:327px;line-height:12px;font-size:8.3px;color:#161616;left:705.5px;">Allow Dynamic Resolution</span>
<div style="left:945.0px;top:329px;width:8px;height:8px;background:#b4b4b4;border-radius:1.5px;"></div>
<div style="left:704.5px;top:340.5px;width:564px;height:23px;background:#9f9f9f;border:1px solid #8a8a8a;border-radius:2px;"></div>
<svg style="left:708px;top:342.5px" width="18" height="19" viewBox="0 0 18 19"><path d="M9 0.8a8 8 0 1 1-4.5 14.6L1.5 17.5l1-3.6A8 8 0 0 1 9 0.8z" fill="#e6e6e6" stroke="#777" stroke-width="0.6"/><rect x="8" y="4" width="2" height="6.5" rx="0.8" fill="#222"/><rect x="8" y="11.8" width="2" height="2" rx="0.8" fill="#222"/></svg>
<span style="top:347px;line-height:12px;font-size:7.3px;color:#1c1c1c;left:729.5px;">MSAA is requested by the camera but not enabled in quality settings. This camera will render without MSAA buffers. If you want MSAA enable it in the quality settings.</span>
<span style="top:372px;line-height:12px;font-size:8.3px;color:#161616;left:705.5px;">Target Eye</span>
<div style="left:944.5px;top:372.5px;width:323.5px;height:11px;background:#adadad;border-radius:1.5px;box-shadow:0 0.7px 0 rgba(0,0,0,0.22);"></div>
<span style="top:372px;line-height:12px;font-size:8.3px;color:#141414;left:947.0px;">Both</span>
<svg style="left:1259.0px;top:376.5px" width="6" height="4" viewBox="0 0 6 4"><path d="M0 0h6L3 4z" fill="#3a3a3a"/></svg>
<div style="left:693px;top:388.1px;width:576px;height:14.5px;background:#a1a1a1;border-top:1px solid #7a7a7a;"></div>
<svg style="left:707px;top:391.6px" width="9" height="9" viewBox="0 0 9 9"><rect x="0.5" y="3" width="5.5" height="5.5" fill="#3a5f9a"/><circle cx="6" cy="3" r="2.4" fill="#4a4a4a"/><circle cx="6" cy="3" r="1" fill="#cfcfcf"/></svg>
<div style="left:719.8px;top:392.1px;width:8px;height:8px;background:#c6c6c6;border-radius:1.5px;"></div>
<svg style="left:719.8px;top:392.1px" width="8" height="8" viewBox="0 0 8 8"><path d="M1.6 4.2L3.3 5.9L6.5 1.9" fill="none" stroke="#222" stroke-width="1"/></svg>
<span style="top:390px;line-height:12px;font-size:8.3px;color:#0c0c0c;font-weight:700;left:732.7px;">Flare Layer</span>
<svg style="left:1233px;top:392.6px" width="7" height="7" viewBox="0 0 7 7"><circle cx="3.5" cy="3.5" r="3.2" fill="#3c3c3c"/><text x="2" y="5.6" font-size="5.5" font-weight="700" fill="#a8a8a8" font-family="Liberation Sans">?</text></svg>
<svg style="left:1245px;top:392.1px" width="9" height="8" viewBox="0 0 9 8"><path d="M0.5 5.5H8.5M5.5 0.5V7.5M0.5 5.5v1.5M3 5.5v1" fill="none" stroke="#3c3c3c" stroke-width="0.9"/></svg>
<svg style="left:1261.5px;top:392.1px" width="2" height="8" viewBox="0 0 2 8"><rect x="0.3" y="0.3" width="1.3" height="1.3" fill="#3c3c3c"/><rect x="0.3" y="3.3" width="1.3" height="1.3" fill="#3c3c3c"/><rect x="0.3" y="6.3" width="1.3" height="1.3" fill="#3c3c3c"/></svg>
<div style="left:693px;top:403.2px;width:576px;height:14.5px;background:#a1a1a1;border-top:1px solid #7a7a7a;"></div>
<svg style="left:707px;top:406.7px" width="9" height="9" viewBox="0 0 9 9"><path d="M1.2 6V4.5a3.3 3.3 0 0 1 6.6 0V6" fill="none" stroke="#d88a28" stroke-width="1.1"/><rect x="0.5" y="5" width="2" height="3.3" fill="#d88a28"/><rect x="6.5" y="5" width="2" height="3.3" fill="#d88a28"/></svg>
<div style="left:719.8px;top:407.2px;width:8px;height:8px;background:#c6c6c6;border-radius:1.5px;"></div>
<svg style="left:719.8px;top:407.2px" width="8" height="8" viewBox="0 0 8 8"><path d="M1.6 4.2L3.3 5.9L6.5 1.9" fill="none" stroke="#222" stroke-width="1"/></svg>
<span style="top:405px;line-height:12px;font-size:8.3px;color:#0c0c0c;font-weight:700;left:732.7px;">Audio Listener</span>
<svg style="left:1233px;top:407.7px" width="7" height="7" viewBox="0 0 7 7"><circle cx="3.5" cy="3.5" r="3.2" fill="#3c3c3c"/><text x="2" y="5.6" font-size="5.5" font-weight="700" fill="#a8a8a8" font-family="Liberation Sans">?</text></svg>
<svg style="left:1245px;top:407.2px" width="9" height="8" viewBox="0 0 9 8"><path d="M0.5 5.5H8.5M5.5 0.5V7.5M0.5 5.5v1.5M3 5.5v1" fill="none" stroke="#3c3c3c" stroke-width="0.9"/></svg>
<svg style="left:1261.5px;top:407.2px" width="2" height="8" viewBox="0 0 2 8"><rect x="0.3" y="0.3" width="1.3" height="1.3" fill="#3c3c3c"/><rect x="0.3" y="3.3" width="1.3" height="1.3" fill="#3c3c3c"/><rect x="0.3" y="6.3" width="1.3" height="1.3" fill="#3c3c3c"/></svg>
<div style="left:693px;top:417.8px;width:576px;height:14.5px;background:#a1a1a1;border-top:1px solid #7a7a7a;"></div>
<svg style="left:696.5px;top:423.3px" width="6" height="4.5" viewBox="0 0 7 5"><path d="M0 0H7L3.5 5Z" fill="#555"/></svg>
<svg style="left:707px;top:421.1px" width="8.5" height="8.5" viewBox="0 0 9 9"><path d="M0.5 0.5h6.4l1.6 1.6v6.4h-8z" fill="#d6e8d6" stroke="#9aa89a" stroke-width="0.5"/><path d="M3.6 1.8L3 7.2M6 1.8L5.4 7.2M1.8 3.5H7.2M1.6 5.6H7" stroke="#1d7a2a" stroke-width="1" fill="none"/></svg>
<div style="left:719.8px;top:421.8px;width:8px;height:8px;background:#c6c6c6;border-radius:1.5px;"></div>
<svg style="left:719.8px;top:421.8px" width="8" height="8" viewBox="0 0 8 8"><path d="M1.6 4.2L3.3 5.9L6.5 1.9" fill="none" stroke="#222" stroke-width="1"/></svg>
<span style="top:420px;line-height:12px;font-size:8.3px;color:#0c0c0c;font-weight:700;left:732.7px;">Manager (Script)</span>
<svg style="left:1233px;top:422.3px" width="7" height="7" viewBox="0 0 7 7"><circle cx="3.5" cy="3.5" r="3.2" fill="#3c3c3c"/><text x="2" y="5.6" font-size="5.5" font-weight="700" fill="#a8a8a8" font-family="Liberation Sans">?</text></svg>
<svg style="left:1245px;top:421.8px" width="9" height="8" viewBox="0 0 9 8"><path d="M0.5 5.5H8.5M5.5 0.5V7.5M0.5 5.5v1.5M3 5.5v1" fill="none" stroke="#3c3c3c" stroke-width="0.9"/></svg>
<svg style="left:1261.5px;top:421.8px" width="2" height="8" viewBox="0 0 2 8"><rect x="0.3" y="0.3" width="1.3" height="1.3" fill="#3c3c3c"/><rect x="0.3" y="3.3" width="1.3" height="1.3" fill="#3c3c3c"/><rect x="0.3" y="6.3" width="1.3" height="1.3" fill="#3c3c3c"/></svg>
<span style="top:436px;line-height:12px;font-size:8.3px;color:#6a6a6a;left:705.5px;">Script</span>
<div style="left:944.5px;top:436.3px;width:323.5px;height:11px;background:#b0b0b0;border-radius:1.5px;box-shadow:0 0.6px 0 rgba(0,0,0,0.13);"></div>
<div style="left:1257px;top:436.3px;width:11px;height:11px;background:#b0b0b0;border-radius:0 1.5px 1.5px 0;"></div>
<svg style="left:1259px;top:438.3px" width="7" height="7" viewBox="0 0 7 7"><circle cx="3.5" cy="3.5" r="2.7" fill="none" stroke="#444" stroke-width="0.8"/><circle cx="3.5" cy="3.5" r="0.9" fill="#444"/></svg>
<svg style="left:946.5px;top:437.8px" width="7" height="8" viewBox="0 0 7 8"><path d="M0.5 0.5h4l2 2v5h-6z" fill="#d4d4d4" stroke="#999" stroke-width="0.5"/><text x="1.5" y="6.3" font-size="5" fill="#8aa08a" font-family="Liberation Sans">#</text></svg>
<span style="top:436px;line-height:12px;font-size:8.3px;color:#6e6e6e;left:955.0px;">Manager</span>
<span style="top:449px;line-height:12px;font-size:8.3px;color:#161616;left:705.5px;">Win Panel</span>
<div style="left:944.5px;top:449.7px;width:323.5px;height:11px;background:#c0c0c0;border-radius:1.5px;box-shadow:0 0.6px 0 rgba(0,0,0,0.13);"></div>
<div style="left:1257px;top:449.7px;width:11px;height:11px;background:#b0b0b0;border-radius:0 1.5px 1.5px 0;"></div>
<svg style="left:1259px;top:451.7px" width="7" height="7" viewBox="0 0 7 7"><circle cx="3.5" cy="3.5" r="2.7" fill="none" stroke="#444" stroke-width="0.8"/><circle cx="3.5" cy="3.5" r="0.9" fill="#444"/></svg>
<svg style="left:946.5px;top:451.2px" width="8" height="8" viewBox="0 0 9 9"><path d="M4.5 0.8L8 2.6V6.4L4.5 8.2L1 6.4V2.6Z M1 2.6L4.5 4.4L8 2.6M4.5 4.4V8.2" fill="none" stroke="#444" stroke-width="0.8"/></svg>
<span style="top:449px;line-height:12px;font-size:8.3px;color:#141414;left:955.0px;">Win</span>
<span style="top:463px;line-height:12px;font-size:8.3px;color:#161616;left:705.5px;">Timer Text</span>
<div style="left:944.5px;top:463.0px;width:323.5px;height:11px;background:#c0c0c0;border-radius:1.5px;box-shadow:0 0.6px 0 rgba(0,0,0,0.13);"></div>
<div style="left:1257px;top:463.0px;width:11px;height:11px;background:#b0b0b0;border-radius:0 1.5px 1.5px 0;"></div>
<svg style="left:1259px;top:465.0px" width="7" height="7" viewBox="0 0 7 7"><circle cx="3.5" cy="3.5" r="2.7" fill="none" stroke="#444" stroke-width="0.8"/><circle cx="3.5" cy="3.5" r="0.9" fill="#444"/></svg>
<svg style="left:946.5px;top:464.5px" width="8" height="8" viewBox="0 0 8 8"><rect x="0.5" y="0.5" width="7" height="7" fill="#3a3a3a"/><path d="M2.2 2.2h3.6M4 2.2V6" stroke="#d0d0d0" stroke-width="0.9" fill="none"/></svg>
<span style="top:463px;line-height:12px;font-size:8.3px;color:#141414;left:955.0px;">Timer (Text)</span>
<span style="top:476px;line-height:12px;font-size:8.3px;color:#161616;left:705.5px;">Pause Panel</span>
<div style="left:944.5px;top:476.3px;width:323.5px;height:11px;background:#c0c0c0;border-radius:1.5px;box-shadow:0 0.6px 0 rgba(0,0,0,0.13);"></div>
<div style="left:1257px;top:476.3px;width:11px;height:11px;background:#b0b0b0;border-radius:0 1.5px 1.5px 0;"></div>
<svg style="left:1259px;top:478.3px" width="7" height="7" viewBox="0 0 7 7"><circle cx="3.5" cy="3.5" r="2.7" fill="none" stroke="#444" stroke-width="0.8"/><circle cx="3.5" cy="3.5" r="0.9" fill="#444"/></svg>
<svg style="left:946.5px;top:477.8px" width="8" height="8" viewBox="0 0 9 9"><path d="M4.5 0.8L8 2.6V6.4L4.5 8.2L1 6.4V2.6Z M1 2.6L4.5 4.4L8 2.6M4.5 4.4V8.2" fill="none" stroke="#444" stroke-width="0.8"/></svg>
<span style="top:476px;line-height:12px;font-size:8.3px;color:#141414;left:955.0px;">PausePanel</span>
<span style="top:489px;line-height:12px;font-size:8.3px;color:#161616;left:705.5px;">Score Text</span>
<div style="left:944.5px;top:489.7px;width:323.5px;height:11px;background:#c0c0c0;border-radius:1.5px;box-shadow:0 0.6px 0 rgba(0,0,0,0.13);"></div>
<div style="left:1257px;top:489.7px;width:11px;height:11px;background:#b0b0b0;border-radius:0 1.5px 1.5px 0;"></div>
<svg style="left:1259px;top:491.7px" width="7" height="7" viewBox="0 0 7 7"><circle cx="3.5" cy="3.5" r="2.7" fill="none" stroke="#444" stroke-width="0.8"/><circle cx="3.5" cy="3.5" r="0.9" fill="#444"/></svg>
<svg style="left:946.5px;top:491.2px" width="8" height="8" viewBox="0 0 8 8"><rect x="0.5" y="0.5" width="7" height="7" fill="#3a3a3a"/><path d="M2.2 2.2h3.6M4 2.2V6" stroke="#d0d0d0" stroke-width="0.9" fill="none"/></svg>
<span style="top:489px;line-height:12px;font-size:8.3px;color:#141414;left:955.0px;">"Value" (Text)</span>
<span style="top:503px;line-height:12px;font-size:8.3px;color:#161616;left:705.5px;">High Score Text</span>
<div style="left:944.5px;top:503.0px;width:323.5px;height:11px;background:#c0c0c0;border-radius:1.5px;box-shadow:0 0.6px 0 rgba(0,0,0,0.13);"></div>
<div style="left:1257px;top:503.0px;width:11px;height:11px;background:#b0b0b0;border-radius:0 1.5px 1.5px 0;"></div>
<svg style="left:1259px;top:505.0px" width="7" height="7" viewBox="0 0 7 7"><circle cx="3.5" cy="3.5" r="2.7" fill="none" stroke="#444" stroke-width="0.8"/><circle cx="3.5" cy="3.5" r="0.9" fill="#444"/></svg>
<svg style="left:946.5px;top:504.5px" width="8" height="8" viewBox="0 0 8 8"><rect x="0.5" y="0.5" width="7" height="7" fill="#3a3a3a"/><path d="M2.2 2.2h3.6M4 2.2V6" stroke="#d0d0d0" stroke-width="0.9" fill="none"/></svg>
<span style="top:503px;line-height:12px;font-size:8.3px;color:#141414;left:955.0px;">"Value" (Text)</span>
<span style="top:516px;line-height:12px;font-size:8.3px;color:#161616;left:705.5px;">Tile Fab</span>
<div style="left:944.5px;top:516.3px;width:323.5px;height:11px;background:#c0c0c0;border-radius:1.5px;box-shadow:0 0.6px 0 rgba(0,0,0,0.13);"></div>
<div style="left:1257px;top:516.3px;width:11px;height:11px;background:#b0b0b0;border-radius:0 1.5px 1.5px 0;"></div>
<svg style="left:1259px;top:518.3px" width="7" height="7" viewBox="0 0 7 7"><circle cx="3.5" cy="3.5" r="2.7" fill="none" stroke="#444" stroke-width="0.8"/><circle cx="3.5" cy="3.5" r="0.9" fill="#444"/></svg>
<svg style="left:946.5px;top:517.8px" width="8" height="8" viewBox="0 0 8 8"><path d="M4 0.3L7.6 2.1V5.9L4 7.7L0.4 5.9V2.1Z" fill="#2a63c0"/><path d="M0.4 2.1L4 3.9L7.6 2.1M4 3.9V7.7" fill="none" stroke="#a9c6f0" stroke-width="0.6"/></svg>
<span style="top:516px;line-height:12px;font-size:8.3px;color:#141414;left:955.0px;">Tile</span>
<span style="top:529px;line-height:12px;font-size:8.3px;color:#161616;left:705.5px;">Score</span>
<div style="left:944.5px;top:529.7px;width:323.5px;height:11px;background:#c0c0c0;border-radius:1.5px;box-shadow:0 0.6px 0 rgba(0,0,0,0.13);"></div>
<span style="top:529px;line-height:12px;font-size:8.3px;color:#141414;left:947.0px;">16</span>
<div style="left:693px;top:545.3px;width:576px;height:14.5px;background:#a1a1a1;border-top:1px solid #7a7a7a;"></div>
<svg style="left:696.5px;top:550.8px" width="6" height="4.5" viewBox="0 0 7 5"><path d="M0 0H7L3.5 5Z" fill="#555"/></svg>
<svg style="left:707px;top:548.5999999999999px" width="8.5" height="8.5" viewBox="0 0 9 9"><path d="M0.5 0.5h6.4l1.6 1.6v6.4h-8z" fill="#d6e8d6" stroke="#9aa89a" stroke-width="0.5"/><path d="M3.6 1.8L3 7.2M6 1.8L5.4 7.2M1.8 3.5H7.2M1.6 5.6H7" stroke="#1d7a2a" stroke-width="1" fill="none"/></svg>
<div style="left:719.8px;top:549.3px;width:8px;height:8px;background:#c6c6c6;border-radius:1.5px;"></div>
<svg style="left:719.8px;top:549.3px" width="8" height="8" viewBox="0 0 8 8"><path d="M1.6 4.2L3.3 5.9L6.5 1.9" fill="none" stroke="#222" stroke-width="1"/></svg>
<span style="top:547px;line-height:12px;font-size:8.3px;color:#0c0c0c;font-weight:700;left:732.7px;">Camera Constant Width (Script)</span>
<svg style="left:1233px;top:549.8px" width="7" height="7" viewBox="0 0 7 7"><circle cx="3.5" cy="3.5" r="3.2" fill="#3c3c3c"/><text x="2" y="5.6" font-size="5.5" font-weight="700" fill="#a8a8a8" font-family="Liberation Sans">?</text></svg>
<svg style="left:1245px;top:549.3px" width="9" height="8" viewBox="0 0 9 8"><path d="M0.5 5.5H8.5M5.5 0.5V7.5M0.5 5.5v1.5M3 5.5v1" fill="none" stroke="#3c3c3c" stroke-width="0.9"/></svg>
<svg style="left:1261.5px;top:549.3px" width="2" height="8" viewBox="0 0 2 8"><rect x="0.3" y="0.3" width="1.3" height="1.3" fill="#3c3c3c"/><rect x="0.3" y="3.3" width="1.3" height="1.3" fill="#3c3c3c"/><rect x="0.3" y="6.3" width="1.3" height="1.3" fill="#3c3c3c"/></svg>
<span style="top:563px;line-height:12px;font-size:8.3px;color:#6a6a6a;left:705.5px;">Script</span>
<div style="left:944.5px;top:563.5px;width:323.5px;height:11px;background:#b0b0b0;border-radius:1.5px;box-shadow:0 0.6px 0 rgba(0,0,0,0.13);"></div>
<div style="left:1257px;top:563.5px;width:11px;height:11px;background:#b0b0b0;border-radius:0 1.5px 1.5px 0;"></div>
<svg style="left:1259px;top:565.5px" width="7" height="7" viewBox="0 0 7 7"><circle cx="3.5" cy="3.5" r="2.7" fill="none" stroke="#444" stroke-width="0.8"/><circle cx="3.5" cy="3.5" r="0.9" fill="#444"/></svg>
<svg style="left:946.5px;top:565px" width="7" height="8" viewBox="0 0 7 8"><path d="M0.5 0.5h4l2 2v5h-6z" fill="#d4d4d4" stroke="#999" stroke-width="0.5"/><text x="1.5" y="6.3" font-size="5" fill="#8aa08a" font-family="Liberation Sans">#</text></svg>
<span style="top:563px;line-height:12px;font-size:8.3px;color:#6e6e6e;left:955.0px;">CameraConstantWidth</span>
<span style="top:577px;line-height:12px;font-size:8.3px;color:#161616;left:705.5px;">Default Resolution</span>
<span style="top:577px;line-height:12px;font-size:8.3px;color:#161616;left:947px;">X</span>
<div style="left:953.5px;top:576.8px;width:96.5px;height:11px;background:#c0c0c0;border-radius:1.5px;box-shadow:0 0.6px 0 rgba(0,0,0,0.13);"></div>
<span style="top:577px;line-height:12px;font-size:8.3px;color:#141414;left:956.0px;">720</span>
<span style="top:577px;line-height:12px;font-size:8.3px;color:#161616;left:1055.5px;">Y</span>
<div style="left:1062.3px;top:576.8px;width:96.5px;height:11px;background:#c0c0c0;border-radius:1.5px;box-shadow:0 0.6px 0 rgba(0,0,0,0.13);"></div>
<span style="top:577px;line-height:12px;font-size:8.3px;color:#141414;left:1064.8px;">1280</span>
<span style="top:591px;line-height:12px;font-size:8.3px;color:#161616;left:705.5px;">Width Or Height</span>
<div style="left:947px;top:596.3px;width:286px;height:1px;background:#6a6a6a;"></div>
<div style="left:944.5px;top:593.7px;width:6.4px;height:6.4px;background:#444;border-radius:3.2px;"></div>
<div style="left:1235.5px;top:591.3px;width:32.5px;height:11px;background:#c0c0c0;border-radius:1.5px;box-shadow:0 0.6px 0 rgba(0,0,0,0.13);"></div>
<span style="top:591px;line-height:12px;font-size:8.3px;color:#141414;left:1238.0px;">0</span>
<div style="left:693px;top:607.5px;width:576px;height:14.5px;background:#a1a1a1;border-top:1px solid #7a7a7a;"></div>
<svg style="left:696.5px;top:613.0px" width="6" height="4.5" viewBox="0 0 7 5"><path d="M0 0H7L3.5 5Z" fill="#555"/></svg>
<svg style="left:707px;top:610.5px" width="9" height="9" viewBox="0 0 9 9"><path d="M0.5 2.5V0.5h2M6.5 0.5h2v2M8.5 6.5v2h-2M2.5 8.5h-2v-2" fill="none" stroke="#3a5fa8" stroke-width="0.9"/><circle cx="3.5" cy="3.8" r="1.1" fill="#333"/><path d="M2 7L4.5 4.8L6 6L7 5.2V7z" fill="#333"/></svg>
<div style="left:719.8px;top:611.5px;width:8px;height:8px;background:#c6c6c6;border-radius:1.5px;"></div>
<svg style="left:719.8px;top:611.5px" width="8" height="8" viewBox="0 0 8 8"><path d="M1.6 4.2L3.3 5.9L6.5 1.9" fill="none" stroke="#222" stroke-width="1"/></svg>
<span style="top:610px;line-height:12px;font-size:8.3px;color:#0c0c0c;font-weight:700;left:732.7px;">Sprite Renderer</span>
<svg style="left:1233px;top:612px" width="7" height="7" viewBox="0 0 7 7"><circle cx="3.5" cy="3.5" r="3.2" fill="#3c3c3c"/><text x="2" y="5.6" font-size="5.5" font-weight="700" fill="#a8a8a8" font-family="Liberation Sans">?</text></svg>
<svg style="left:1245px;top:611.5px" width="9" height="8" viewBox="0 0 9 8"><path d="M0.5 5.5H8.5M5.5 0.5V7.5M0.5 5.5v1.5M3 5.5v1" fill="none" stroke="#3c3c3c" stroke-width="0.9"/></svg>
<svg style="left:1261.5px;top:611.5px" width="2" height="8" viewBox="0 0 2 8"><rect x="0.3" y="0.3" width="1.3" height="1.3" fill="#3c3c3c"/><rect x="0.3" y="3.3" width="1.3" height="1.3" fill="#3c3c3c"/><rect x="0.3" y="6.3" width="1.3" height="1.3" fill="#3c3c3c"/></svg>
<span style="top:625px;line-height:12px;font-size:8.3px;color:#161616;left:705.5px;">Sprite</span>
<div style="left:944.5px;top:625.5px;width:323.5px;height:11px;background:#c0c0c0;border-radius:1.5px;box-shadow:0 0.6px 0 rgba(0,0,0,0.13);"></div>
<div style="left:1257px;top:625.5px;width:11px;height:11px;background:#b0b0b0;border-radius:0 1.5px 1.5px 0;"></div>
<svg style="left:1259px;top:627.5px" width="7" height="7" viewBox="0 0 7 7"><circle cx="3.5" cy="3.5" r="2.7" fill="none" stroke="#444" stroke-width="0.8"/><circle cx="3.5" cy="3.5" r="0.9" fill="#444"/></svg>
<span style="top:625px;line-height:12px;font-size:8.3px;color:#141414;left:947.0px;">None (Sprite)</span>
<span style="top:639px;line-height:12px;font-size:8.3px;color:#161616;left:705.5px;">Color</span>
<div style="left:944.5px;top:638.8px;width:312.5px;height:10.5px;background:#ffffff;"></div>
<div style="left:1257px;top:638.8px;width:11px;height:10.5px;background:#a8a8a8;"></div>
<svg style="left:1258.5px;top:640.3px" width="8" height="8" viewBox="0 0 8 8"><path d="M0.8 7.2L4.6 3.4" stroke="#333" stroke-width="1.1"/><path d="M4 2L6 4M5 3L6.6 1.4" stroke="#333" stroke-width="1.7"/></svg>
<span style="top:652px;line-height:12px;font-size:8.3px;color:#161616;left:705.5px;">Flip</span>
<div style="left:945.0px;top:653.7px;width:8px;height:8px;background:#b4b4b4;border-radius:1.5px;"></div>
<span style="top:652px;line-height:12px;font-size:8.3px;color:#161616;left:957px;">X</span>
<div style="left:965px;top:653.7px;width:8px;height:8px;background:#b4b4b4;border-radius:1.5px;"></div>
<span style="top:652px;line-height:12px;font-size:8.3px;color:#161616;left:977.5px;">Y</span>
<span style="top:665px;line-height:12px;font-size:8.3px;color:#161616;left:705.5px;">Draw Mode</span>
<div style="left:944.5px;top:665.3px;width:323.5px;height:11px;background:#adadad;border-radius:1.5px;box-shadow:0 0.7px 0 rgba(0,0,0,0.22);"></div>
<span style="top:665px;line-height:12px;font-size:8.3px;color:#141414;left:947.0px;">Simple</span>
<svg style="left:1259.0px;top:669.3px" width="6" height="4" viewBox="0 0 6 4"><path d="M0 0h6L3 4z" fill="#3a3a3a"/></svg>
<div style="left:1270px;top:62px;width:10px;height:617px;background:#989898;"></div>
<div style="left:1273px;top:120.5px;width:7px;height:435.5px;background:#7c7c7c;"></div>
<svg style="left:1273px;top:64.5px" width="6" height="4" viewBox="0 0 6 4"><path d="M0 4h6L3 0z" fill="#4a4a4a"/></svg>
<svg style="left:1273px;top:671px" width="6" height="4" viewBox="0 0 6 4"><path d="M0 0h6L3 4z" fill="#4a4a4a"/></svg>
<svg style="left:10.5px;top:33px" width="11" height="11" viewBox="0 0 11 11"><path d="M3 10.6L0.4 6.4L1.4 5.6L2.6 6.8V2.2H3.9V5V0.9H5.2V5V0.5H6.5V5V1.2H7.8V5.4L8.6 3.4H9.9L9 7.6L8 10.6z" fill="#2e2e2e"/></svg>
<svg style="left:32px;top:33.5px" width="10" height="10" viewBox="0 0 10 10"><path d="M5 0.8V9.2M0.8 5H9.2" stroke="#4a4a4a" stroke-width="0.8"/><path d="M5 0L6.2 1.8H3.8zM5 10L6.2 8.2H3.8zM0 5L1.8 3.8V6.2zM10 5L8.2 3.8V6.2z" fill="#3a3a3a"/></svg>
<svg style="left:54px;top:33.5px" width="10" height="10" viewBox="0 0 10 10"><path d="M7.8 2.4A3.9 3.9 0 1 0 8.9 5" fill="none" stroke="#2e2e2e" stroke-width="1" stroke-dasharray="3.2 1.2"/><path d="M5.8 0.6H8.8V3.6z" fill="#2e2e2e"/></svg>
<svg style="left:75.5px;top:34px" width="9" height="9" viewBox="0 0 9 9"><path d="M0.6 8.4V0.6H8.4V8.4H6.4M0.6 8.4H2.8V5.6H0.6M4.4 2.4H6.6V4.6" fill="none" stroke="#2e2e2e" stroke-width="1"/></svg>
<svg style="left:96.5px;top:34px" width="10" height="9" viewBox="0 0 10 9"><path d="M1.5 1.2V7.5H8.5" fill="none" stroke="#e8e8e8" stroke-width="1.1"/><rect x="0.5" y="0" width="2" height="2" fill="#f4f4f4"/><rect x="7.5" y="0" width="2" height="2" fill="#f4f4f4"/><rect x="7.5" y="6.5" width="2" height="2" fill="#f4f4f4"/><rect x="0.5" y="6.5" width="2" height="2" fill="#e0e0e0"/></svg>
<svg style="left:117.5px;top:33.5px" width="10" height="10" viewBox="0 0 10 10"><circle cx="5" cy="5" r="3.6" fill="none" stroke="#2e2e2e" stroke-width="0.9" stroke-dasharray="2 1"/><ellipse cx="5" cy="5" rx="3.6" ry="1.6" fill="none" stroke="#2e2e2e" stroke-width="0.7"/><path d="M5 1V9M1 8.8L8.8 1" stroke="#2e2e2e" stroke-width="0.7"/></svg>
<svg style="left:139px;top:33.5px" width="10" height="10" viewBox="0 0 10 10"><path d="M1 9L8.6 1.4M3 1L9 7.6" stroke="#2e2e2e" stroke-width="1.3"/><path d="M0.6 2.6L3.2 0.6" stroke="#2e2e2e" stroke-width="1.6"/></svg>
<svg style="left:165.5px;top:33.5px" width="10" height="10" viewBox="0 0 10 10"><path d="M0.5 0.8H9.2V9.5" fill="none" stroke="#333" stroke-width="0.9"/><path d="M2.5 7.8L7.8 2.4M7.8 2.4H5.4M7.8 2.4V4.8" fill="none" stroke="#333" stroke-width="0.9"/><circle cx="2.2" cy="8" r="1.4" fill="none" stroke="#c0392b" stroke-width="0.9"/></svg>
<svg style="left:208px;top:33.5px" width="10" height="10" viewBox="0 0 10 10"><path d="M5 0.6L9 2.6V7.2L5 9.4L1 7.2V2.6Z M1 2.6L5 4.8L9 2.6M5 4.8V9.4" fill="none" stroke="#3a3a3a" stroke-width="0.8" stroke-dasharray="1.6 0.8"/><path d="M5 5L8 8" stroke="#c0392b" stroke-width="1.1"/></svg>
<svg style="left:251.5px;top:34px" width="10" height="9" viewBox="0 0 10 9"><path d="M0.5 1.2H6.5M2.5 4H7.5M5 4V7.5" stroke="#5a5a5a" stroke-width="0.9" fill="none"/><path d="M5.2 6.8h3.4" stroke="#a85a4a" stroke-width="1.6"/></svg>
<svg style="left:600px;top:34.5px" width="8" height="8" viewBox="0 0 8 8"><path d="M0.8 0.2L7.2 4L0.8 7.8z" fill="#f4f4f4"/></svg>
<svg style="left:622.5px;top:34.5px" width="6" height="8" viewBox="0 0 6 8"><rect x="0.3" y="0.3" width="1.8" height="7.4" fill="#3c3c3c"/><rect x="3.7" y="0.3" width="1.8" height="7.4" fill="#3c3c3c"/></svg>
<svg style="left:642.5px;top:34.5px" width="8" height="8" viewBox="0 0 8 8"><path d="M0.4 0.3L5.6 4L0.4 7.7z" fill="#3c3c3c"/><rect x="6.2" y="0.3" width="1.3" height="7.4" fill="#3c3c3c"/></svg>
<svg style="left:1026.5px;top:34.5px" width="8" height="8" viewBox="0 0 8 8"><path d="M1 4.2L3.1 6.4L7 1.4" fill="none" stroke="#e6e6e6" stroke-width="1.5"/></svg>
<svg style="left:1063px;top:37px" width="5" height="3" viewBox="0 0 5 3"><path d="M0 0h5L2.5 3z" fill="#6a6a6a"/></svg>
<svg style="left:1082.5px;top:34.5px" width="12" height="8" viewBox="0 0 12 8"><path d="M2.6 7.5a2.3 2.3 0 0 1 0-4.4A3.2 3.2 0 0 1 8.6 2.4a2.6 2.6 0 0 1 0.8 5.1z" fill="#3c3c3c"/></svg>
<svg style="left:1148px;top:37px" width="6" height="4" viewBox="0 0 6 4"><path d="M0 0h6L3 4z" fill="#333"/></svg>
<svg style="left:1206.5px;top:37px" width="6" height="4" viewBox="0 0 6 4"><path d="M0 0h6L3 4z" fill="#333"/></svg>
<svg style="left:1265px;top:37px" width="6" height="4" viewBox="0 0 6 4"><path d="M0 0h6L3 4z" fill="#333"/></svg>
<svg style="left:4.5px;top:3.5px" width="7" height="7" viewBox="0 0 7 7"><path d="M6.5 0.6L2.6 2.2V4.8L6.5 6.4M2.6 2.2L0.6 3.5L2.6 4.8M6.5 0.6V6.4M2.8 3.5H6.4" fill="none" stroke="#e8e8e8" stroke-width="0.8"/></svg>
<span style="top:497px;line-height:12px;font-size:8.6px;color:#101010;left:15.5px;">Console</span>
<svg style="left:5px;top:499px" width="8" height="7" viewBox="0 0 8 7"><rect x="0.5" y="0.5" width="7" height="6" fill="none" stroke="#3a3a3a" stroke-width="0.9"/><path d="M0.5 2.6H7.5M0.5 4.6H7.5" stroke="#3a3a3a" stroke-width="0.7"/></svg>
<svg style="left:61px;top:498.8px" width="8.5" height="7" viewBox="0 0 9 7"><path d="M0.2 0.4H3.4L4.2 1.3H8.8V6.8H0.2z" fill="#3c3c3c"/></svg>
<span style="top:497px;line-height:12px;font-size:8.6px;color:#101010;left:71.5px;">Project</span>
<svg style="left:670px;top:499.0px" width="6.5" height="6.5" viewBox="0 0 8 8"><path d="M2.2 3.6V2.4a1.8 1.8 0 0 1 3.6 0V3.6" fill="none" stroke="#3a3a3a" stroke-width="0.9"/><rect x="1" y="3.6" width="6" height="3.8" fill="none" stroke="#3a3a3a" stroke-width="0.9"/></svg>
<svg style="left:682px;top:498.5px" width="2" height="8" viewBox="0 0 2 8"><rect x="0.3" y="0.3" width="1.3" height="1.3" fill="#3a3a3a"/><rect x="0.3" y="3.3" width="1.3" height="1.3" fill="#3a3a3a"/><rect x="0.3" y="6.3" width="1.3" height="1.3" fill="#3a3a3a"/></svg>
<svg style="left:5.5px;top:511.5px" width="8" height="8" viewBox="0 0 8 8"><path d="M4 0v8M0 4h8" stroke="#2a2a2a" stroke-width="1"/></svg>
<svg style="left:16px;top:514.5px" width="4" height="3" viewBox="0 0 4 3"><path d="M0 0h4L2 3z" fill="#333"/></svg>
<div style="left:411px;top:510.5px;width:200px;height:10px;background:#c6c6c6;border-radius:5px;"></div>
<svg style="left:414px;top:512.5px" width="7" height="7" viewBox="0 0 7 7"><circle cx="2.6" cy="2.6" r="1.8" fill="none" stroke="#555" stroke-width="0.8"/><path d="M4 4L6 6" stroke="#555" stroke-width="0.9"/></svg>
<div style="left:613px;top:510px;width:1px;height:12px;background:#8a8a8a;"></div>
<div style="left:629.5px;top:510px;width:1px;height:12px;background:#8a8a8a;"></div>
<div style="left:663.5px;top:510px;width:1px;height:12px;background:#8a8a8a;"></div>
<svg style="left:617px;top:511.5px" width="9" height="8" viewBox="0 0 9 8"><rect x="0.3" y="0.3" width="3.4" height="3" fill="#3a3a3a"/><rect x="0.3" y="4.3" width="3.4" height="3.4" fill="#3a3a3a"/><path d="M4.8 2.8L8.6 4.6L4.8 7z" fill="#3a3a3a"/></svg>
<svg style="left:633.5px;top:512px" width="9" height="7" viewBox="0 0 9 7"><path d="M0.4 3.4L3.6 0.4H8.4V3.6L5.2 6.8z" fill="#4a4a4a"/></svg>
<svg style="left:651px;top:511.5px" width="9" height="8" viewBox="0 0 9 8"><path d="M4.5 0.3L5.7 3H8.6L6.3 4.8L7.2 7.7L4.5 6L1.8 7.7L2.7 4.8L0.4 3H3.3z" fill="#6e6e6e"/></svg>
<svg style="left:667.5px;top:511.5px" width="11" height="8" viewBox="0 0 11 8"><path d="M0.5 4C2 1.6 4 1 5.5 1S9 1.6 10.5 4C9 6.4 7 7 5.5 7S2 6.4 0.5 4z" fill="none" stroke="#333" stroke-width="0.9"/><circle cx="5.5" cy="4" r="1.5" fill="#333"/><path d="M1.4 7.6L9.6 0.4" stroke="#333" stroke-width="0.9"/></svg>
<span style="top:511px;line-height:12px;font-size:8px;color:#1a1a1a;left:681px;">10</span>
<svg style="left:3.5px;top:526.0px" width="6" height="4.5" viewBox="0 0 7 5"><path d="M0 0H7L3.5 5Z" fill="#555"/></svg>
<svg style="left:12px;top:523.5px" width="9.5" height="9" viewBox="0 0 9 8"><path d="M4.5 0.3L5.7 3H8.6L6.3 4.8L7.2 7.7L4.5 6L1.8 7.7L2.7 4.8L0.4 3H3.3z" fill="#bfa21c"/></svg>
<span style="top:522px;line-height:12px;font-size:8.6px;color:#0c0c0c;font-weight:700;left:23.3px;">Favorites</span>
<svg style="left:21px;top:534.5px" width="8" height="8" viewBox="0 0 8 8"><circle cx="3" cy="3" r="2.3" fill="none" stroke="#3a3a3a" stroke-width="0.8"/><path d="M4.8 4.8L7.4 7.4" stroke="#3a3a3a" stroke-width="1"/></svg>
<span style="top:533px;line-height:12px;font-size:8.6px;color:#141414;left:32.5px;">All Materials</span>
<svg style="left:21px;top:545px" width="8" height="8" viewBox="0 0 8 8"><circle cx="3" cy="3" r="2.3" fill="none" stroke="#3a3a3a" stroke-width="0.8"/><path d="M4.8 4.8L7.4 7.4" stroke="#3a3a3a" stroke-width="1"/></svg>
<span style="top:543px;line-height:12px;font-size:8.6px;color:#141414;left:32.5px;">All Models</span>
<svg style="left:3.5px;top:567.9px" width="6" height="4.5" viewBox="0 0 7 5"><path d="M0 0H7L3.5 5Z" fill="#555"/></svg>
<svg style="left:12px;top:566.5px" width="10" height="7" viewBox="0 0 10 7"><path d="M0.3 0.4H3.2L4 1.3H7.8V2.6H2.2L0.3 6.4z" fill="#3c3c3c"/><path d="M2.6 3.2H9.8L8 6.8H0.6z" fill="#3c3c3c"/></svg>
<span style="top:564px;line-height:12px;font-size:8.6px;color:#0c0c0c;font-weight:700;left:23.3px;">Assets</span>
<svg style="left:13px;top:578.3px" width="6" height="4.5" viewBox="0 0 7 5"><path d="M0 0H7L3.5 5Z" fill="#555"/></svg>
<svg style="left:21.5px;top:577.0px" width="10" height="7" viewBox="0 0 10 7"><path d="M0.3 0.4H3.2L4 1.3H7.8V2.6H2.2L0.3 6.4z" fill="#3c3c3c"/><path d="M2.6 3.2H9.8L8 6.8H0.6z" fill="#3c3c3c"/></svg>
<span style="top:575px;line-height:12px;font-size:8.6px;color:#141414;left:32.5px;">2048</span>
<svg style="left:31px;top:587.3px" width="8.5" height="7" viewBox="0 0 9 7"><path d="M0.2 0.4H3.4L4.2 1.3H8.8V6.8H0.2z" fill="#3c3c3c"/></svg>
<span style="top:585px;line-height:12px;font-size:8.6px;color:#141414;left:41.5px;">batt eui</span>
<svg style="left:31px;top:597.9px" width="8.5" height="7" viewBox="0 0 9 7"><path d="M0.2 0.4H3.4L4.2 1.3H8.8V6.8H0.2z" fill="#3c3c3c"/></svg>
<span style="top:596px;line-height:12px;font-size:8.6px;color:#141414;left:41.5px;">Fonts</span>
<svg style="left:31px;top:608.5px" width="8.5" height="7" viewBox="0 0 9 7"><path d="M0.2 0.4H3.4L4.2 1.3H8.8V6.8H0.2z" fill="#3c3c3c"/></svg>
<span style="top:606px;line-height:12px;font-size:8.6px;color:#141414;left:41.5px;">Prefabs</span>
<svg style="left:31px;top:619.1999999999999px" width="8.5" height="7" viewBox="0 0 9 7"><path d="M0.2 0.4H3.4L4.2 1.3H8.8V6.8H0.2z" fill="#3c3c3c"/></svg>
<span style="top:617px;line-height:12px;font-size:8.6px;color:#141414;left:41.5px;">Scripts</span>
<svg style="left:31px;top:629.9px" width="8.5" height="7" viewBox="0 0 9 7"><path d="M0.2 0.4H3.4L4.2 1.3H8.8V6.8H0.2z" fill="#3c3c3c"/></svg>
<span style="top:628px;line-height:12px;font-size:8.6px;color:#141414;left:41.5px;">Sounds</span>
<svg style="left:4px;top:641.0px" width="4.5" height="6" viewBox="0 0 5 7"><path d="M0 0L5 3.5L0 7Z" fill="#555"/></svg>
<svg style="left:12px;top:640.7px" width="8.5" height="7" viewBox="0 0 9 7"><path d="M0.2 0.4H3.4L4.2 1.3H8.8V6.8H0.2z" fill="#3c3c3c"/></svg>
<span style="top:638px;line-height:12px;font-size:8.6px;color:#0c0c0c;font-weight:700;left:23.3px;">Packages</span>
<span style="top:523px;line-height:12px;font-size:8.5px;color:#0c0c0c;font-weight:700;left:218.5px;">Assets</span>
<span style="top:523px;line-height:12px;font-size:8.5px;color:#5a5a5a;left:247.5px;">&gt;</span>
<span style="top:523px;line-height:12px;font-size:8.5px;color:#0c0c0c;font-weight:700;left:254.7px;">2048</span>
<span style="top:523px;line-height:12px;font-size:8.5px;color:#5a5a5a;left:279.5px;">&gt;</span>
<span style="top:523px;line-height:12px;font-size:8.5px;color:#0c0c0c;font-weight:700;left:286.6px;">Scripts</span>
<svg style="left:229.5px;top:544.5px" width="33" height="39" viewBox="-1 -1 33 39"><path d="M1.5 0H25L30.5 5.5V35a1.5 1.5 0 0 1-1.5 1.5H1.5A1.5 1.5 0 0 1 0 35V1.5A1.5 1.5 0 0 1 1.5 0z" fill="#d9d9d9" stroke="#8d8d8d" stroke-width="1"/><path d="M25 0V5.5H30.5z" fill="#a5a5a5"/><g stroke="#17791f" stroke-width="3" fill="none"><path d="M12.6 7.8L9.6 30M20 7.8L17 30M6.2 14.6H24M5.2 23H23"/></g></svg>
<svg style="left:279px;top:544.5px" width="33" height="39" viewBox="-1 -1 33 39"><path d="M1.5 0H25L30.5 5.5V35a1.5 1.5 0 0 1-1.5 1.5H1.5A1.5 1.5 0 0 1 0 35V1.5A1.5 1.5 0 0 1 1.5 0z" fill="#d9d9d9" stroke="#8d8d8d" stroke-width="1"/><path d="M25 0V5.5H30.5z" fill="#a5a5a5"/><g stroke="#17791f" stroke-width="3" fill="none"><path d="M12.6 7.8L9.6 30M20 7.8L17 30M6.2 14.6H24M5.2 23H23"/></g></svg>
<svg style="left:328.3px;top:544.5px" width="33" height="39" viewBox="-1 -1 33 39"><path d="M1.5 0H25L30.5 5.5V35a1.5 1.5 0 0 1-1.5 1.5H1.5A1.5 1.5 0 0 1 0 35V1.5A1.5 1.5 0 0 1 1.5 0z" fill="#d9d9d9" stroke="#8d8d8d" stroke-width="1"/><path d="M25 0V5.5H30.5z" fill="#a5a5a5"/><g stroke="#17791f" stroke-width="3" fill="none"><path d="M12.6 7.8L9.6 30M20 7.8L17 30M6.2 14.6H24M5.2 23H23"/></g></svg>
<span style="top:585px;line-height:12px;font-size:6.9px;color:#1a1a1a;left:145.5px;width:200px;text-align:center;">CameraC...</span>
<span style="top:585px;line-height:12px;font-size:6.9px;color:#1a1a1a;left:195px;width:200px;text-align:center;">Manager</span>
<span style="top:585px;line-height:12px;font-size:6.9px;color:#1a1a1a;left:244.5px;width:200px;text-align:center;">Tile</span>
<div style="left:644px;top:671.7px;width:37px;height:1px;background:#6e6e6e;"></div>
<div style="left:661.5px;top:669px;width:6px;height:6px;background:#484848;border-radius:3px;"></div>
<svg style="left:10.5px;top:700.5px" width="11" height="11" viewBox="0 0 11 11"><path d="M0 1.5L4.6 0.9V5.2H0zM5.3 0.8L11 0V5.2H5.3zM0 5.9H4.6V10.1L0 9.5zM5.3 5.9H11V11L5.3 10.2z" fill="#f2f2f2"/></svg>
<svg style="left:42px;top:700px" width="12" height="12" viewBox="0 0 12 12"><circle cx="7.2" cy="4.6" r="3.4" fill="none" stroke="#f2f2f2" stroke-width="1.1"/><path d="M4.8 7.2L1 11" stroke="#f2f2f2" stroke-width="1.2"/></svg>
<svg style="left:74px;top:701px" width="12" height="10" viewBox="0 0 12 10"><path d="M0.5 2.2H7.5V8.2H0.5z" fill="none" stroke="#f2f2f2" stroke-width="1.1"/><path d="M10 0.5V2.2M10 3.6V9.5" stroke="#f2f2f2" stroke-width="1.3"/><path d="M0.5 5.2h7" stroke="#f2f2f2" stroke-width="0.9"/></svg>
<svg style="left:106px;top:698.5px" width="15" height="15" viewBox="0 0 16 16"><circle cx="8" cy="8" r="7.6" fill="#e04a35"/><path d="M8 8L1.4 4.2A7.6 7.6 0 0 0 8 15.6L11.8 9z" fill="#2fa24c"/><path d="M8 8L11.8 9L8 15.6A7.6 7.6 0 0 0 14.9 4.8H8z" fill="#f2c230"/><circle cx="8" cy="8" r="3.5" fill="#f1f1f1"/><circle cx="8" cy="8" r="2.7" fill="#4a86e8"/></svg>
<svg style="left:139px;top:700px" width="15" height="12.5" viewBox="0 0 15 12.5"><path d="M0 1.2H5.5L6.6 2.4H15V12.5H0z" fill="#f0c24a"/><rect x="0" y="3.6" width="15" height="2" fill="#f7dc8a"/><rect x="3" y="6.4" width="9" height="6.1" fill="#4aa0e0"/><rect x="5.4" y="9.3" width="4.2" height="3.2" fill="#f0c24a"/></svg>
<svg style="left:171px;top:697.5px" width="17" height="18" viewBox="0 0 17 18"><path d="M8.5 0.8C13.6 0.8 16 3.4 16 7.8S13.4 14.6 8.8 14.6L5.6 17.2V14.2C2.4 13.4 1 11.4 1 7.8S3.4 0.8 8.5 0.8z" fill="#e9e2f7" stroke="#7a5cc6" stroke-width="1.6"/><path d="M5.6 4.4C5.2 7.6 7.4 10.6 11.2 11.2L12.2 9.8L10.4 8.6L9.6 9.2C8.4 8.8 7.6 7.8 7.4 6.8L8 6L7 4.2z" fill="#7a5cc6"/><path d="M9 3.6A3.4 3.4 0 0 1 12.2 7" fill="none" stroke="#7a5cc6" stroke-width="0.8"/></svg>
<div style="left:196px;top:693px;width:32px;height:27px;background:#4b4b50;"></div>
<div style="left:204px;top:699px;width:16px;height:15.5px;background:#0a0a0a;"></div>
<svg style="left:207px;top:702px" width="10" height="10" viewBox="0 0 10 10"><path d="M9 0.8L3.8 3V7L9 9.2M3.8 3L1 5L3.8 7M9 0.8V9.2M4 5H9" fill="none" stroke="#f0f0f0" stroke-width="0.9"/></svg>
<svg style="left:236.5px;top:698px" width="17" height="16" viewBox="0 0 17 16"><path d="M12 0.3L16.6 2.2V13.8L12 15.7L4.6 9.6L1.8 11.8L0.4 11V5L1.8 4.2L4.6 6.4z" fill="#7a52c2"/><path d="M12 4.8L8 8L12 11.2zM1.8 6.2V9.8L3.6 8z" fill="#2a2140"/><rect x="12" y="0.6" width="2.4" height="14.8" fill="#9a78d8" opacity="0.6"/></svg>
<div style="left:101px;top:718.3px;width:26px;height:1.7px;background:#8fb9e6;"></div>
<div style="left:166px;top:718.3px;width:26.5px;height:1.7px;background:#8fb9e6;"></div>
<div style="left:196px;top:718.3px;width:32px;height:1.7px;background:#8fb9e6;"></div>
<div style="left:231px;top:718.3px;width:26px;height:1.7px;background:#8fb9e6;"></div>
<svg style="left:1030.5px;top:701px" width="10" height="10" viewBox="0 0 10 10"><rect x="0.3" y="0.3" width="8.4" height="8.4" rx="1.6" fill="#19a3ad"/><circle cx="4.4" cy="4.4" r="2.2" fill="none" stroke="#e8ffff" stroke-width="1.1"/><rect x="6.4" y="6.4" width="3.3" height="3.3" fill="#7fd8e0"/></svg>
<svg style="left:1045px;top:702px" width="13" height="8" viewBox="0 0 13 8"><path d="M2.8 7.8a2.4 2.4 0 0 1 0-4.6A3.4 3.4 0 0 1 9.2 2.6a2.7 2.7 0 0 1 0.9 5.2z" fill="#dcdcdc"/></svg>
<svg style="left:1063px;top:700.5px" width="11" height="11" viewBox="0 0 11 11"><path d="M5.5 0.6L10.2 3V8L5.5 10.4L0.8 8V3z" fill="none" stroke="#f2f2f2" stroke-width="1"/><path d="M3 5.5H8M6.4 3.8L8.2 5.5L6.4 7.2" fill="none" stroke="#f2f2f2" stroke-width="0.9"/></svg>
<svg style="left:1079px;top:699.5px" width="8" height="13" viewBox="0 0 8 13"><path d="M1.5 0.8H6.5" stroke="#f2f2f2" stroke-width="1"/><rect x="0.8" y="3" width="6.2" height="9" rx="1" fill="none" stroke="#f2f2f2" stroke-width="1"/></svg>
<svg style="left:1093.5px;top:700.5px" width="11" height="11" viewBox="0 0 11 11"><circle cx="5.5" cy="5.5" r="5.2" fill="#7560b8"/><path d="M3.6 2.8C3.2 5.2 5 7.6 7.8 8L8.4 7L7.2 6.2L6.6 6.6C5.8 6.2 5.2 5.6 5 4.8L5.4 4.2L4.6 2.8z" fill="#ece6fa"/></svg>
<svg style="left:1109.5px;top:700px" width="13" height="12" viewBox="0 0 13 12"><rect x="0.5" y="0.5" width="9" height="7.5" rx="1.5" fill="#f2f2f2"/><path d="M0.5 4.2H9.5" stroke="#333" stroke-width="0.8"/><path d="M9.4 5L12.8 11.4H6z" fill="#f2c230"/></svg>
<svg style="left:1126px;top:701px" width="28" height="10" viewBox="0 0 28 10"><path d="M1 0.5V9M1 0.8H3.4M1 4.2H3M5 7.5V9.3" stroke="#f2f2f2" stroke-width="1"/><path d="M10.8 0.8V8.2" stroke="#f2f2f2" stroke-width="1.1"/><path d="M17 3.2H19L21.2 1V9L19 6.8H17z" fill="#f2f2f2"/><path d="M22.8 2.8A3 3 0 0 1 22.8 7.2M24.6 1.4A5 5 0 0 1 24.6 8.6" fill="none" stroke="#f2f2f2" stroke-width="0.9"/></svg>
<svg style="left:1160px;top:700px" width="13" height="12" viewBox="0 0 13 12"><path d="M5 5.2L7.4 2.8A1.9 1.9 0 0 1 10.2 5.6L8.8 7M7.6 4.4L5.2 6.8A1.9 1.9 0 0 0 8 9.6" fill="none" stroke="#f2f2f2" stroke-width="1"/><rect x="1" y="7.2" width="3.4" height="3.4" fill="none" stroke="#f2f2f2" stroke-width="0.9"/></svg>
<span style="top:701px;line-height:12px;font-size:7.8px;color:#f2f2f2;left:1181px;">ENG</span>
<span style="top:695px;line-height:12px;font-size:7.8px;color:#f2f2f2;left:1122.5px;width:200px;text-align:center;">16:36</span>
<span style="top:706px;line-height:12px;font-size:7.8px;color:#f2f2f2;left:1122.5px;width:200px;text-align:center;">16.06.2020</span>
<svg style="left:1253px;top:700.5px" width="10" height="11" viewBox="0 0 10 11"><path d="M0.5 1H9.5" stroke="#f2f2f2" stroke-width="1"/><path d="M0.5 6.6H9.5V8.4H6.4L5 10.2L3.6 8.4H0.5z" fill="none" stroke="#f2f2f2" stroke-width="0.9"/></svg>
</div></body></html>
